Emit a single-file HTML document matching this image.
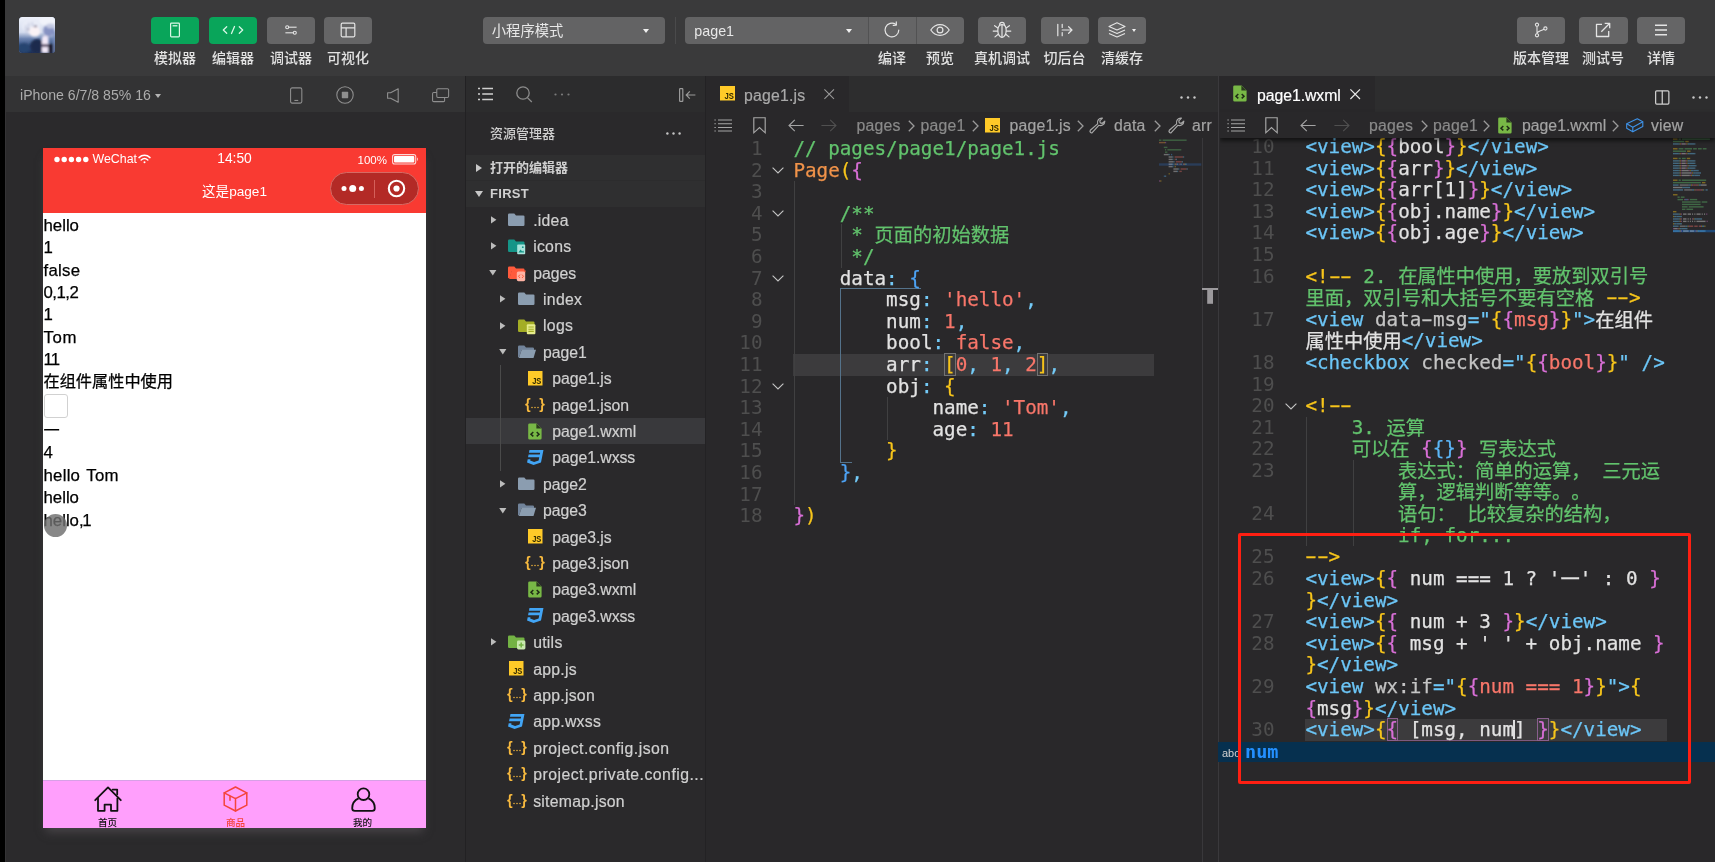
<!DOCTYPE html>
<html lang="zh-CN">
<head>
<meta charset="utf-8">
<title>page1 - WeChat DevTools</title>
<style>
*{box-sizing:border-box;margin:0;padding:0}
html,body{width:1715px;height:862px;overflow:hidden;background:#222123}
body{position:relative;font-family:"Liberation Sans","Noto Sans CJK SC",sans-serif;color:#ddd;-webkit-font-smoothing:antialiased}
.abs{position:absolute}
svg{display:block;overflow:visible}
#toolbar,#sim,#phone,#exp,.ed{will-change:transform}
/* toolbar */
#toolbar{position:absolute;left:0;top:0;width:1715px;height:76px;background:#3a3a3b}
.tbtn{position:absolute;top:17px;height:26.5px;border-radius:4px;background:#656566}
.tbtn.g{background:#09a55a}
.tbtn svg{position:absolute;left:50%;top:50%;transform:translate(-50%,-50%)}
.tlab{position:absolute;top:49.300px;height:18px;line-height:18px;font-size:14px;font-weight:500;color:#e2e2e2;text-align:center;white-space:nowrap;transform:translateX(-50%)}
.dd{position:absolute;top:17px;height:26.500px;background:#636364;border-radius:4px;color:#e8e8e8;font-size:14.300px;line-height:28px;padding-left:9.300px;white-space:nowrap}
.caret{position:absolute;width:0;height:0;border-left:3px solid transparent;border-right:3px solid transparent;border-top:4px solid #f0f0f0}
#leftstrip{position:absolute;left:0;top:0;width:5px;height:862px;background:#000}
</style>
</head>
<body>
<div id="toolbar">
  <!-- avatar -->
  <div class="abs" style="left:19px;top:17px;width:36.400px;height:36.200px;border-radius:3.500px;overflow:hidden;background:#8fa3c4">
    <svg width="36.400" height="36.200" viewBox="0 0 36 36" preserveAspectRatio="none">
      <defs>
        <linearGradient id="avbg" x1="0" y1="0" x2="0" y2="1"><stop offset="0" stop-color="#eef1fa"/><stop offset="0.420" stop-color="#d4dcee"/><stop offset="0.600" stop-color="#6b83b0"/><stop offset="0.800" stop-color="#34507e"/><stop offset="1" stop-color="#1d2f55"/></linearGradient>
        <filter id="avbl" x="-20%" y="-20%" width="140%" height="140%"><feGaussianBlur stdDeviation="0.800"/></filter>
      </defs>
      <rect width="36" height="36" fill="url(#avbg)"/>
      <g filter="url(#avbl)">
        <ellipse cx="29.500" cy="13.500" rx="5.500" ry="6" fill="#8692c2"/>
        <ellipse cx="28" cy="4" rx="8" ry="4.500" fill="#f1f3fa"/>
        <ellipse cx="31" cy="9" rx="4" ry="2.500" fill="#c3c9e2"/>
        <ellipse cx="12" cy="9" rx="9" ry="7" fill="#e9ecf7"/>
        <path d="M7 8c-1 3 0 7 2 10M10 6c-1 3-1 6 0 9M13 5c0 2 0 4 1 6" stroke="#b9bfd8" stroke-width="1" fill="none"/>
        <ellipse cx="15.500" cy="14.500" rx="5.500" ry="5" fill="#faf2f5"/>
        <ellipse cx="16.300" cy="9.300" rx="1.600" ry="0.900" fill="#5a5474"/>
        <ellipse cx="9" cy="12.200" rx="1.200" ry="0.700" fill="#8a88a4"/>
        <ellipse cx="18" cy="29" rx="7" ry="7" fill="#1b2a4e"/>
        <ellipse cx="5" cy="31" rx="6" ry="5" fill="#274470"/>
        <path d="M22.600 36V21.500c0-2 1.500-3.200 3.300-3.200s3.300 1.200 3.300 3.200V36Z" fill="#f1e8f7"/>
        <rect x="22.400" y="27.200" width="7" height="2.400" fill="#3b2c4c"/>
        <rect x="29.300" y="27" width="4.800" height="9" fill="#14172b"/>
        <rect x="34" y="14" width="2" height="22" fill="#7c8ebc"/>
      </g>
    </svg>
  </div>
  <!-- left group -->
  <div class="tbtn g" style="left:151px;width:48px">
    <svg width="10" height="15" viewBox="0 0 10 15" fill="none" stroke="#d9f7e6" stroke-width="1.2"><rect x="0.6" y="0.6" width="8.8" height="13.8" rx="0.8"/><path d="M2.6 3.3h4.8" stroke-width="1.3"/></svg>
  </div>
  <div class="tbtn g" style="left:209px;width:48px">
    <svg width="21" height="8" viewBox="0 0 21 8" fill="none" stroke="#d9f7e6" stroke-width="1.3" stroke-linecap="round" stroke-linejoin="round"><path d="M4.2 0.8L0.8 4l3.4 3.2M16.8 0.8L20.2 4l-3.4 3.2M12 0.5L9 7.5"/></svg>
  </div>
  <div class="tbtn" style="left:266.5px;width:48.5px">
    <svg width="12" height="10" viewBox="0 0 12 10" fill="none" stroke="#e4e4e4" stroke-width="1.1"><circle cx="2.2" cy="2.2" r="1.5"/><path d="M3.8 2.2H11.6"/><circle cx="9.8" cy="7.8" r="1.5"/><path d="M0.4 7.8H8.2"/></svg>
  </div>
  <div class="tbtn" style="left:324px;width:48px">
    <svg width="15" height="15" viewBox="0 0 15 15" fill="none" stroke="#e4e4e4" stroke-width="1.2"><rect x="0.7" y="0.7" width="13.6" height="13.6" rx="1.2"/><path d="M0.7 5.3H14.3M5.6 5.3V14.3"/></svg>
  </div>
  <div class="tlab" style="left:175px">模拟器</div>
  <div class="tlab" style="left:233px">编辑器</div>
  <div class="tlab" style="left:291px">调试器</div>
  <div class="tlab" style="left:348px">可视化</div>

  <!-- middle -->
  <div class="dd" style="left:482.5px;width:182.5px">小程序模式<span class="caret" style="left:160px;top:12px"></span></div>
  <div class="abs" style="left:675px;top:17px;width:1px;height:27px;background:#4a4a4b"></div>
  <div class="dd" style="left:685px;width:183px;border-radius:4px 0 0 4px">page1<span class="caret" style="left:161px;top:12px"></span></div>
  <div class="tbtn" style="left:868px;width:47.500px;border-radius:0;border-left:1px solid #525253">
    <svg width="17.500" height="17.500" viewBox="0 0 16 16" fill="none" stroke="#e4e4e4" stroke-width="1.100" stroke-linecap="round"><path d="M14.2 8A6.3 6.3 0 1 1 11.6 2.9"/><path d="M11.9 0.6l0.1 2.9-2.9 0.2" stroke-linejoin="round"/></svg>
  </div>
  <div class="tbtn" style="left:915.500px;width:48.300px;border-radius:0 4px 4px 0;border-left:1px solid #525253">
    <svg width="20" height="12" viewBox="0 0 20 12" fill="none" stroke="#e4e4e4" stroke-width="1.2"><path d="M0.8 6C3.2 2.4 6.4 0.7 10 0.7S16.8 2.4 19.2 6C16.8 9.6 13.6 11.3 10 11.3S3.2 9.6 0.8 6Z"/><circle cx="10" cy="6" r="2.9"/></svg>
  </div>
  <div class="tbtn" style="left:978px;width:48px">
    <svg width="20" height="17" viewBox="0 0 20 17" fill="none" stroke="#e4e4e4" stroke-width="1.2" stroke-linecap="round"><path d="M10 3.2c-2.6 0-4.2 2-4.2 5.6S7.4 15.8 10 15.8s4.2-3.4 4.2-7S12.600 3.200 10 3.200Z"/><path d="M10 3.400V15.600"/><path d="M7.600 3.600C7.600 1.800 8.600 0.800 10 0.800s2.400 1 2.400 2.800"/><path d="M5.800 6.400L2.600 4.200M5.600 9.600H1.200M6.200 12.800L3 15.400M14.200 6.400l3.200-2.200M14.400 9.600h4.400M13.800 12.800l3.200 2.600"/></svg>
  </div>
  <div class="tbtn" style="left:1040.5px;width:48px">
    <svg width="16" height="13" viewBox="0 0 16 13" fill="none" stroke="#e4e4e4" stroke-width="1.2" stroke-linecap="round" stroke-linejoin="round"><path d="M0.800 0.800V12.200M5.200 0.800v3.200M5.200 9v3.200M5.200 6.500H15M11.600 3.200L15 6.500l-3.400 3.300"/></svg>
  </div>
  <div class="tbtn" style="left:1098px;width:48px">
    <svg style="margin-left:-5px" width="18" height="16" viewBox="0 0 18 16" fill="none" stroke="#e4e4e4" stroke-width="1.1" stroke-linejoin="round"><path d="M9 0.800L17 4.400 9 8 1 4.400Z"/><path d="M1 8L9 11.600 17 8"/><path d="M1 11.400L9 15 17 11.400"/></svg>
    <span class="caret" style="left:34px;top:11.5px;border-left-width:2.5px;border-right-width:2.5px;border-top-width:3.5px"></span>
  </div>
  <div class="tlab" style="left:892px">编译</div>
  <div class="tlab" style="left:940px">预览</div>
  <div class="tlab" style="left:1002px">真机调试</div>
  <div class="tlab" style="left:1064.500px">切后台</div>
  <div class="tlab" style="left:1122px">清缓存</div>

  <!-- right -->
  <div class="tbtn" style="left:1517px;width:48px">
    <svg width="14" height="15" viewBox="0 0 14 15" fill="none" stroke="#e4e4e4" stroke-width="1.1"><circle cx="3" cy="2.200" r="1.600"/><circle cx="3" cy="12.800" r="1.600"/><circle cx="11.400" cy="6" r="1.600"/><path d="M3 3.800V11.200M3 11.200C3 8.500 6 8.800 10 6.800"/></svg>
  </div>
  <div class="tbtn" style="left:1579px;width:48.500px">
    <svg width="15" height="15" viewBox="0 0 15 15" fill="none" stroke="#e4e4e4" stroke-width="1.300" stroke-linejoin="round"><path d="M6.500 1.800H1v12.200h12.200V8.500"/><path d="M5.800 9.200L14 1M9.200 0.800H14.200V5.800"/></svg>
  </div>
  <div class="tbtn" style="left:1637px;width:48px">
    <svg width="13" height="12" viewBox="0 0 13 12" fill="none" stroke="#e4e4e4" stroke-width="1.400"><path d="M0.500 1.200H12.500M0.500 6H12.500M0.500 10.800H12.500"/></svg>
  </div>
  <div class="tlab" style="left:1541px">版本管理</div>
  <div class="tlab" style="left:1603px">测试号</div>
  <div class="tlab" style="left:1661px">详情</div>
</div>
<style>
#sim{position:absolute;left:5px;top:76px;width:460.500px;height:786px;background:#2b2a2c;border-left:1px solid #343335}
#simhead{position:absolute;left:0;top:0;width:461px;height:35.5px;background:#333334}
#simhead .dev{position:absolute;left:14px;top:9.600px;font-size:14.100px;line-height:18px;color:#acacac;white-space:nowrap}
#phone{position:absolute;left:43px;top:148px;width:383px;height:680px;background:#fff;box-shadow:0 7px 9px -3px rgba(75,72,75,.9)}
#phead{position:absolute;left:0;top:0;width:100%;height:65px;background:#f93a32}
#phead .st{position:absolute;top:4px;height:14px;line-height:14px;font-size:12px;color:#fff;white-space:nowrap}
#pbody{position:absolute;left:0.500px;top:66.800px;color:#000;-webkit-text-stroke-width:0.250px;font-size:16.8px;line-height:22.4px;white-space:nowrap}
#pbody div{height:22.4px}
#ptab{position:absolute;left:0;top:631.500px;width:100%;height:48.500px;background:#ff9ffc;border-top:1px solid #d7a0e6}
#ptab .tl{position:absolute;top:36.200px;font-weight:500;font-size:9.600px;line-height:12px;transform:translateX(-50%);white-space:nowrap;color:#111}
</style>
<div id="sim">
  <div id="simhead">
    <div class="dev">iPhone 6/7/8 85% 16 <span style="display:inline-block;width:0;height:0;border-left:3.500px solid transparent;border-right:3.500px solid transparent;border-top:4.500px solid #b4b4b4;vertical-align:1.500px"></span></div>
    <svg class="abs" style="left:284.200px;top:10.800px" width="12.600" height="17" viewBox="0 0 13 17" fill="none" stroke="#8f8f8f" stroke-width="1.100"><rect x="0.600" y="0.600" width="11.600" height="15.800" rx="1.600"/><path d="M4.500 13.600h4"/></svg>
    <svg class="abs" style="left:329.600px;top:10.200px" width="18" height="18" viewBox="0 0 18 18" fill="none" stroke="#8f8f8f" stroke-width="1.100"><circle cx="9" cy="9" r="8.200"/><rect x="5.800" y="5.800" width="6.400" height="6.400" rx="0.600" fill="#8f8f8f" stroke="none"/></svg>
    <svg class="abs" style="left:381px;top:11.800px" width="12" height="15" viewBox="0 0 12 15" fill="none" stroke="#8f8f8f" stroke-width="1.100" stroke-linejoin="round"><path d="M0.600 4.700H3.600L11.200 0.800V14.200L3.600 10.300H0.600Z"/></svg>
    <svg class="abs" style="left:426.200px;top:11.800px" width="17.200" height="14.500" viewBox="0 0 18 15" fill="none" stroke="#8f8f8f" stroke-width="1.100" stroke-linejoin="round"><rect x="5" y="0.600" width="12.400" height="9.200" rx="1.200"/><path d="M5 4.600H1.800a1.200 1.200 0 0 0-1.200 1.200V13a1.200 1.200 0 0 0 1.200 1.200H12a1.200 1.200 0 0 0 1.200-1.200V9.800"/></svg>
  </div>
</div>
<div id="phone">
  <div id="phead">
    <!-- status bar -->
    <svg class="abs" style="left:10.500px;top:8px" width="36" height="7" viewBox="0 0 36 7" fill="#fff"><circle cx="3" cy="3.500" r="2.700"/><circle cx="10.200" cy="3.500" r="2.700"/><circle cx="17.400" cy="3.500" r="2.700"/><circle cx="24.600" cy="3.500" r="2.700"/><circle cx="31.800" cy="3.500" r="2.700"/></svg>
    <div class="st" style="left:49.500px;font-size:12.400px">WeChat</div>
    <svg class="abs" style="left:94.500px;top:6px" width="13" height="10" viewBox="0 0 13 10" fill="none" stroke="#fff" stroke-width="1.500" stroke-linecap="round"><path d="M1 3.600C4.200 0.600 8.800 0.600 12 3.600"/><path d="M3.200 6C5.200 4.200 7.800 4.200 9.800 6"/><circle cx="6.500" cy="8.300" r="1" fill="#fff" stroke="none"/></svg>
    <div class="st" style="left:0;width:100%;text-align:center;font-size:13.800px;top:3.500px">14:50</div>
    <div class="st" style="left:314.500px;font-size:11.500px;top:4.500px">100%</div>
    <svg class="abs" style="left:349px;top:6px" width="27" height="11" viewBox="0 0 28 11" preserveAspectRatio="none"><rect x="0.600" y="0.600" width="24" height="9.400" rx="2" fill="none" stroke="#fff" stroke-width="1.100" opacity=".8"/><rect x="2.100" y="2.100" width="21" height="6.400" rx="1" fill="#fff"/><path d="M26 3.600v3.400c1.200-0.300 1.200-3.100 0-3.400Z" fill="#fff" opacity=".8"/></svg>
    <div class="abs" style="left:0;width:100%;top:34.700px;text-align:center;font-size:13.600px;line-height:18px;color:#fff">这是page1</div>
    <!-- capsule -->
    <div class="abs" style="left:286.800px;top:24.300px;width:89.200px;height:32.500px;border-radius:16.500px;background:#b32a26;border:1px solid #d66a64">
      <svg class="abs" style="left:10.500px;top:10.500px" width="24" height="9" viewBox="0 0 24 9" fill="#fff"><circle cx="3" cy="4.500" r="2.500"/><circle cx="11.700" cy="4.500" r="3.500"/><circle cx="20.400" cy="4.500" r="2.500"/></svg>
      <div class="abs" style="left:43px;top:6.500px;width:1px;height:18px;background:#d4605a"></div>
      <svg class="abs" style="left:56.500px;top:6px" width="19" height="19" viewBox="0 0 19 19"><circle cx="9.500" cy="9.500" r="7.700" fill="none" stroke="#fff" stroke-width="2.100"/><circle cx="9.500" cy="9.500" r="3.100" fill="#fff"/></svg>
    </div>
  </div>
  <div id="pbody">
    <div>hello</div>
    <div>1</div>
    <div style="letter-spacing:0.300px">false</div>
    <div style="letter-spacing:-0.500px">0,1,2</div>
    <div>1</div>
    <div style="letter-spacing:0.700px">Tom</div>
    <div style="letter-spacing:-0.900px">11</div>
    <div style="font-size:16.200px;position:relative;top:-1.500px">在组件属性中使用</div>
    <div style="height:26.100px"><span style="display:block;position:relative;left:0.500px;top:0.200px;width:24px;height:23.500px;border:1px solid #d1d1d1;border-radius:3px;background:#fff"></span></div>
    <div style="font-size:16.200px;position:relative;top:-1.500px">一</div>
    <div>4</div>
    <div style="word-spacing:1.500px;letter-spacing:0.250px">hello Tom</div>
    <div>hello</div>
    <div>hello<span style="letter-spacing:-1.400px">,1</span></div>
  </div>
  <div id="ptab">
    <!-- home -->
    <svg class="abs" style="left:50.500px;top:5.500px" width="28" height="26" viewBox="0 0 28 26" fill="none" stroke="#111" stroke-width="1.800" stroke-linejoin="round" stroke-linecap="round"><path d="M1.200 14.200L14 1.400 26.800 14.200"/><path d="M4 12.400V24.800H10.600V18.600H17V24.800H23.400V12.400"/><path d="M18.600 3.600H23.200V8.400"/></svg>
    <!-- box -->
    <svg class="abs" style="left:180px;top:5.500px" width="25" height="26" viewBox="0 0 25 26" fill="none" stroke="#f5443b" stroke-width="1.500" stroke-linejoin="round" stroke-linecap="round"><path d="M12.500 1L23.800 6.800V19.200L12.500 25 1.200 19.200V6.800Z"/><path d="M1.200 6.800L12.500 12.600 23.800 6.800M12.500 12.600V25M7 9.800V14.200"/></svg>
    <!-- user -->
    <svg class="abs" style="left:307.500px;top:6.500px" width="25" height="25" viewBox="0 0 25 25" fill="none" stroke="#111" stroke-width="1.800" stroke-linejoin="round"><circle cx="12.500" cy="7.200" r="5.800"/><path d="M7.600 11.400C3.200 13.400 1.200 17.400 1.200 21.200C1.200 22.800 2.200 23.800 3.800 23.800H21.200C22.800 23.800 23.800 22.800 23.800 21.200C23.800 17.400 21.800 13.400 17.400 11.400"/></svg>
    <div class="tl" style="left:64.500px">首页</div>
    <div class="tl" style="left:192.500px;color:#f5443b">商品</div>
    <div class="tl" style="left:319.500px">我的</div>
  </div>
  <div class="abs" style="left:0.500px;top:365.500px;width:23px;height:23px;border-radius:50%;background:rgba(110,110,110,.82)"></div>
</div>
<style>
#exp{position:absolute;left:466px;top:76px;width:239.300px;height:786px;background:#2a292b;overflow:hidden}
#exp .hd{position:absolute;left:0;top:0;width:100%;height:35.500px;background:#2c2c2d}
#exp .sec{position:absolute;left:0;width:100%;background:#2f2f30}
#exp .st{position:absolute;left:24px;font-size:13px;font-weight:700;color:#d0d0d0;white-space:nowrap;line-height:18px}
.row{position:absolute;left:0;width:100%;height:26.400px}
.row.sel{background:#39393c}
.row .nm{position:absolute;top:1px;line-height:26.400px;font-size:15.800px;color:#d0d0d0;white-space:nowrap;letter-spacing:0.250px;-webkit-text-stroke-width:0.200px}
.row .ar{position:absolute}
.row .ic{position:absolute}
</style>
<div id="exp">
  <div class="hd">
    <svg class="abs" style="left:12px;top:11px" width="15" height="14" viewBox="0 0 15 14" fill="none" stroke="#cfcfcf" stroke-width="1.500"><path d="M4.200 1.400H15M4.200 7H15M4.200 12.600H15"/><path d="M0 1.400H2M0 7H2M0 12.600H2"/></svg>
    <svg class="abs" style="left:49.500px;top:9.500px" width="17" height="17" viewBox="0 0 17 17" fill="none" stroke="#8c8c8c" stroke-width="1.300"><circle cx="7" cy="7" r="6.200"/><path d="M11.400 11.600L15.800 16"/></svg>
    <svg class="abs" style="left:88px;top:17px" width="16" height="3" viewBox="0 0 16 3" fill="#7a7a7a"><circle cx="1.500" cy="1.500" r="1.100"/><circle cx="8" cy="1.500" r="1.100"/><circle cx="14.500" cy="1.500" r="1.100"/></svg>
    <svg class="abs" style="left:212.500px;top:11.500px" width="17" height="14" viewBox="0 0 17 14" fill="none" stroke="#9a9a9a" stroke-width="1.200"><rect x="0.600" y="0.600" width="3.200" height="12.800" rx="0.600"/><path d="M16.400 7H7.400M10.800 3.400L7.200 7l3.600 3.600"/></svg>
  </div>
  <div class="abs" style="left:24px;top:48.800px;font-size:13px;font-weight:500;line-height:18px;color:#cfcfcf;white-space:nowrap">资源管理器</div>
  <svg class="abs" style="left:200px;top:55.500px" width="15" height="3" viewBox="0 0 15 3" fill="#c4c4c4"><circle cx="1.400" cy="1.500" r="1.200"/><circle cx="7.500" cy="1.500" r="1.200"/><circle cx="13.600" cy="1.500" r="1.200"/></svg>
  <div class="sec" style="top:78.500px;height:52.500px"></div>
  <div class="abs" style="left:0;top:104px;width:100%;height:1px;background:#2c2c2d"></div>
  <svg class="abs" style="left:10px;top:87.500px" width="6" height="8" viewBox="0 0 6 8"><path d="M0 0L6 4 0 8Z" fill="#c8c8c8"/></svg>
  <div class="st" style="top:82.500px">打开的编辑器</div>
  <svg class="abs" style="left:8.500px;top:115px" width="8" height="6" viewBox="0 0 8 6"><path d="M0 0H8L4 6Z" fill="#c8c8c8"/></svg>
  <div class="st" style="top:108.500px;letter-spacing:0.300px">FIRST</div>

<div class="row" style="top:130.8px"><span class="ar" style="left:24.5px;top:9.200px"><svg width="5.400" height="7.600" viewBox="0 0 6 8"><path d="M0 0L6 4 0 8Z" fill="#bcbcbc"/></svg></span><span class="ic" style="left:41.5px;top:6.200px"><svg width="19" height="16" viewBox="0 0 19 16"><path d="M1.2 0.600H6.300L8 2.400H15.300A1.200 1.200 0 0 1 16.500 3.600V11.800A1.200 1.200 0 0 1 15.300 13H1.200A1.200 1.200 0 0 1 0 11.800V1.800A1.200 1.200 0 0 1 1.200 0.600Z" fill="#8b9db0"/></svg></span><span class="nm" style="left:67.2px">.idea</span></div>
<div class="row" style="top:157.2px"><span class="ar" style="left:24.5px;top:9.200px"><svg width="5.400" height="7.600" viewBox="0 0 6 8"><path d="M0 0L6 4 0 8Z" fill="#bcbcbc"/></svg></span><span class="ic" style="left:41.5px;top:6.200px"><svg width="19" height="16" viewBox="0 0 19 16"><path d="M1.2 0.600H6.300L8 2.400H15.300A1.200 1.200 0 0 1 16.500 3.600V11.800A1.200 1.200 0 0 1 15.300 13H1.200A1.200 1.200 0 0 1 0 11.800V1.800A1.200 1.200 0 0 1 1.200 0.600Z" fill="#159588"/><rect x="9.200" y="5.600" width="8" height="9.600" rx="0.800" fill="#a9e4dc"/><path d="M10.400 13.600l2.200-3 1.600 1.800 1-1 1 2.200Z" fill="#159588"/><circle cx="14.800" cy="8.200" r="0.900" fill="#159588"/></svg></span><span class="nm" style="left:67.2px">icons</span></div>
<div class="row" style="top:183.6px"><span class="ar" style="left:23.0px;top:10.500px"><svg width="7.600" height="5.400" viewBox="0 0 8 6"><path d="M0 0H8L4 6Z" fill="#bcbcbc"/></svg></span><span class="ic" style="left:41.5px;top:6.200px"><svg width="19" height="16" viewBox="0 0 19 16"><path d="M1.200 0.600H6.300L8 2.400H15.300A1.200 1.200 0 0 1 16.500 3.600V5H3.800L1.600 12.600 0 12V1.800A1.200 1.200 0 0 1 1.200 0.600Z" fill="#ff5a3c"/><path d="M3.600 4.600H17.800L15.600 13H1.200Z" fill="#ff5a3c"/><rect x="8.800" y="5.400" width="8.400" height="9.800" rx="1.600" fill="#ffb3a4"/><path d="M12 8.600l-1.500 1.700 1.500 1.700M14 8.600l1.500 1.700-1.500 1.700" stroke="#ff5a3c" stroke-width="1" fill="none"/></svg></span><span class="nm" style="left:67.2px;letter-spacing:-0.050px">pages</span></div>
<div class="row" style="top:210.0px"><span class="ar" style="left:34.4px;top:9.200px"><svg width="5.400" height="7.600" viewBox="0 0 6 8"><path d="M0 0L6 4 0 8Z" fill="#bcbcbc"/></svg></span><span class="ic" style="left:51.5px;top:6.200px"><svg width="19" height="16" viewBox="0 0 19 16"><path d="M1.2 0.600H6.300L8 2.400H15.300A1.200 1.200 0 0 1 16.500 3.600V11.800A1.200 1.200 0 0 1 15.300 13H1.200A1.200 1.200 0 0 1 0 11.800V1.800A1.200 1.200 0 0 1 1.200 0.600Z" fill="#8b9db0"/></svg></span><span class="nm" style="left:77.1px">index</span></div>
<div class="row" style="top:236.4px"><span class="ar" style="left:34.4px;top:9.200px"><svg width="5.400" height="7.600" viewBox="0 0 6 8"><path d="M0 0L6 4 0 8Z" fill="#bcbcbc"/></svg></span><span class="ic" style="left:51.5px;top:6.200px"><svg width="19" height="16" viewBox="0 0 19 16"><path d="M1.2 0.600H6.300L8 2.400H15.300A1.200 1.200 0 0 1 16.500 3.600V11.800A1.200 1.200 0 0 1 15.300 13H1.200A1.200 1.200 0 0 1 0 11.800V1.800A1.200 1.200 0 0 1 1.200 0.600Z" fill="#a4ad25"/><rect x="8.800" y="5.200" width="8.600" height="10" rx="1" fill="#e6ec8c"/><path d="M10.400 8h5.400M10.400 10.200h5.400M10.400 12.400h5.400" stroke="#a4ad25" stroke-width="1.100"/></svg></span><span class="nm" style="left:77.1px">logs</span></div>
<div class="row" style="top:262.8px"><span class="ar" style="left:32.9px;top:10.500px"><svg width="7.600" height="5.400" viewBox="0 0 8 6"><path d="M0 0H8L4 6Z" fill="#bcbcbc"/></svg></span><span class="ic" style="left:51.5px;top:6.200px"><svg width="19" height="16" viewBox="0 0 19 16"><path d="M1.200 0.600H6.300L8 2.400H14.800A1.200 1.200 0 0 1 16 3.600V5H3.600L1 12.800 0 12V1.800A1.200 1.200 0 0 1 1.200 0.600Z" fill="#71839a"/><path d="M3.700 4.800H18L15.500 13H0.900Z" fill="#8b9db0"/></svg></span><span class="nm" style="left:77.1px;letter-spacing:-0.050px">page1</span></div>
<div class="row" style="top:289.2px"><span class="ic" style="left:62.0px;top:5.9px"><svg width="14.500" height="14.500" viewBox="0 0 14.500 14.500"><rect width="14.500" height="14.500" fill="#ffca28"/><text x="4.200" y="12.600" font-family="Liberation Sans,sans-serif" font-weight="700" font-size="9.400" fill="#2f2800" textLength="9.200" lengthAdjust="spacingAndGlyphs">JS</text></svg></span><span class="nm" style="left:86.3px;letter-spacing:-0.050px">page1.js</span></div>
<div class="row" style="top:315.6px"><span class="ic" style="left:59.3px;top:5.2px"><svg width="20" height="16" viewBox="0 0 20 16"><text x="0" y="12.400" font-family="Liberation Sans,sans-serif" font-weight="700" font-size="14.500" fill="#f7b93e">{</text><text x="20" y="12.400" text-anchor="end" font-family="Liberation Sans,sans-serif" font-weight="700" font-size="14.500" fill="#f7b93e">}</text><circle cx="7" cy="10.600" r="0.750" fill="#f7b93e"/><circle cx="10" cy="10.600" r="0.750" fill="#f7b93e"/><circle cx="13" cy="10.600" r="0.750" fill="#f7b93e"/></svg></span><span class="nm" style="left:86.3px;letter-spacing:-0.050px">page1.json</span></div>
<div class="row sel" style="top:342.0px"><span class="ic" style="left:62.3px;top:4.7px"><svg width="14" height="17" viewBox="0 0 14 17"><path d="M1.600 0.400H8.600L13.600 5.400V15.200A1.400 1.400 0 0 1 12.200 16.600H1.600A1.400 1.400 0 0 1 0.200 15.200V1.800A1.400 1.400 0 0 1 1.600 0.400Z" fill="#78b846"/><path d="M8.400 0.400V5.600H13.600Z" fill="#2b3a1f"/><path d="M5.300 9L3 11.200 5.300 13.400M8.700 9L11 11.200 8.700 13.400" stroke="#1f2b16" stroke-width="1.500" fill="none"/></svg></span><span class="nm" style="left:86.3px;letter-spacing:-0.050px">page1.wxml</span></div>
<div class="row" style="top:368.4px"><span class="ic" style="left:61.0px;top:5.7px"><svg width="16.500" height="15" viewBox="2 3 20 18"><path d="M5 3l-.65 3.340h13.590L17.500 8.500H3.920l-.66 3.330h13.590l-.76 3.810-5.480 1.810-4.750-1.810.33-1.640H2.850l-.79 4 7.850 3 9.050-3 1.200-6.030.24-1.210L21.940 3H5z" fill="#42a5f5"/></svg></span><span class="nm" style="left:86.3px;letter-spacing:-0.050px">page1.wxss</span></div>
<div class="row" style="top:394.8px"><span class="ar" style="left:34.4px;top:9.200px"><svg width="5.400" height="7.600" viewBox="0 0 6 8"><path d="M0 0L6 4 0 8Z" fill="#bcbcbc"/></svg></span><span class="ic" style="left:51.5px;top:6.200px"><svg width="19" height="16" viewBox="0 0 19 16"><path d="M1.2 0.600H6.300L8 2.400H15.300A1.200 1.200 0 0 1 16.500 3.600V11.800A1.200 1.200 0 0 1 15.300 13H1.200A1.200 1.200 0 0 1 0 11.800V1.800A1.200 1.200 0 0 1 1.200 0.600Z" fill="#8b9db0"/></svg></span><span class="nm" style="left:77.1px;letter-spacing:-0.050px">page2</span></div>
<div class="row" style="top:421.2px"><span class="ar" style="left:32.9px;top:10.500px"><svg width="7.600" height="5.400" viewBox="0 0 8 6"><path d="M0 0H8L4 6Z" fill="#bcbcbc"/></svg></span><span class="ic" style="left:51.5px;top:6.200px"><svg width="19" height="16" viewBox="0 0 19 16"><path d="M1.200 0.600H6.300L8 2.400H14.800A1.200 1.200 0 0 1 16 3.600V5H3.600L1 12.800 0 12V1.800A1.200 1.200 0 0 1 1.200 0.600Z" fill="#71839a"/><path d="M3.700 4.800H18L15.500 13H0.900Z" fill="#8b9db0"/></svg></span><span class="nm" style="left:77.1px;letter-spacing:-0.050px">page3</span></div>
<div class="row" style="top:447.6px"><span class="ic" style="left:62.0px;top:5.9px"><svg width="14.500" height="14.500" viewBox="0 0 14.500 14.500"><rect width="14.500" height="14.500" fill="#ffca28"/><text x="4.200" y="12.600" font-family="Liberation Sans,sans-serif" font-weight="700" font-size="9.400" fill="#2f2800" textLength="9.200" lengthAdjust="spacingAndGlyphs">JS</text></svg></span><span class="nm" style="left:86.3px;letter-spacing:-0.050px">page3.js</span></div>
<div class="row" style="top:474.0px"><span class="ic" style="left:59.3px;top:5.2px"><svg width="20" height="16" viewBox="0 0 20 16"><text x="0" y="12.400" font-family="Liberation Sans,sans-serif" font-weight="700" font-size="14.500" fill="#f7b93e">{</text><text x="20" y="12.400" text-anchor="end" font-family="Liberation Sans,sans-serif" font-weight="700" font-size="14.500" fill="#f7b93e">}</text><circle cx="7" cy="10.600" r="0.750" fill="#f7b93e"/><circle cx="10" cy="10.600" r="0.750" fill="#f7b93e"/><circle cx="13" cy="10.600" r="0.750" fill="#f7b93e"/></svg></span><span class="nm" style="left:86.3px;letter-spacing:-0.050px">page3.json</span></div>
<div class="row" style="top:500.4px"><span class="ic" style="left:62.3px;top:4.7px"><svg width="14" height="17" viewBox="0 0 14 17"><path d="M1.600 0.400H8.600L13.600 5.400V15.200A1.400 1.400 0 0 1 12.200 16.600H1.600A1.400 1.400 0 0 1 0.200 15.200V1.800A1.400 1.400 0 0 1 1.600 0.400Z" fill="#78b846"/><path d="M8.400 0.400V5.600H13.600Z" fill="#2b3a1f"/><path d="M5.300 9L3 11.200 5.300 13.400M8.700 9L11 11.200 8.700 13.400" stroke="#1f2b16" stroke-width="1.500" fill="none"/></svg></span><span class="nm" style="left:86.3px;letter-spacing:-0.050px">page3.wxml</span></div>
<div class="row" style="top:526.8px"><span class="ic" style="left:61.0px;top:5.7px"><svg width="16.500" height="15" viewBox="2 3 20 18"><path d="M5 3l-.65 3.340h13.590L17.500 8.500H3.920l-.66 3.330h13.590l-.76 3.810-5.480 1.810-4.750-1.810.33-1.640H2.850l-.79 4 7.850 3 9.050-3 1.200-6.030.24-1.210L21.940 3H5z" fill="#42a5f5"/></svg></span><span class="nm" style="left:86.3px;letter-spacing:-0.050px">page3.wxss</span></div>
<div class="row" style="top:553.2px"><span class="ar" style="left:24.5px;top:9.200px"><svg width="5.400" height="7.600" viewBox="0 0 6 8"><path d="M0 0L6 4 0 8Z" fill="#bcbcbc"/></svg></span><span class="ic" style="left:41.5px;top:6.200px"><svg width="19" height="16" viewBox="0 0 19 16"><path d="M1.2 0.600H6.300L8 2.400H15.300A1.200 1.200 0 0 1 16.500 3.600V11.800A1.200 1.200 0 0 1 15.300 13H1.200A1.200 1.200 0 0 1 0 11.800V1.800A1.200 1.200 0 0 1 1.200 0.600Z" fill="#73b244"/><rect x="9" y="5.600" width="8.400" height="8.800" rx="1.400" fill="#c8e8ae"/><path d="M13.200 7.400v5.200M10.800 10h4.800" stroke="#73b244" stroke-width="1.500"/></svg></span><span class="nm" style="left:67.2px">utils</span></div>
<div class="row" style="top:579.6px"><span class="ic" style="left:43.2px;top:5.9px"><svg width="14.500" height="14.500" viewBox="0 0 14.500 14.500"><rect width="14.500" height="14.500" fill="#ffca28"/><text x="4.200" y="12.600" font-family="Liberation Sans,sans-serif" font-weight="700" font-size="9.400" fill="#2f2800" textLength="9.200" lengthAdjust="spacingAndGlyphs">JS</text></svg></span><span class="nm" style="left:67.2px">app.js</span></div>
<div class="row" style="top:606.0px"><span class="ic" style="left:40.5px;top:5.2px"><svg width="20" height="16" viewBox="0 0 20 16"><text x="0" y="12.400" font-family="Liberation Sans,sans-serif" font-weight="700" font-size="14.500" fill="#f7b93e">{</text><text x="20" y="12.400" text-anchor="end" font-family="Liberation Sans,sans-serif" font-weight="700" font-size="14.500" fill="#f7b93e">}</text><circle cx="7" cy="10.600" r="0.750" fill="#f7b93e"/><circle cx="10" cy="10.600" r="0.750" fill="#f7b93e"/><circle cx="13" cy="10.600" r="0.750" fill="#f7b93e"/></svg></span><span class="nm" style="left:67.2px">app.json</span></div>
<div class="row" style="top:632.4px"><span class="ic" style="left:42.2px;top:5.7px"><svg width="16.500" height="15" viewBox="2 3 20 18"><path d="M5 3l-.65 3.340h13.590L17.500 8.500H3.920l-.66 3.330h13.590l-.76 3.810-5.480 1.810-4.750-1.810.33-1.640H2.850l-.79 4 7.850 3 9.050-3 1.200-6.030.24-1.210L21.940 3H5z" fill="#42a5f5"/></svg></span><span class="nm" style="left:67.2px">app.wxss</span></div>
<div class="row" style="top:658.8px"><span class="ic" style="left:40.5px;top:5.2px"><svg width="20" height="16" viewBox="0 0 20 16"><text x="0" y="12.400" font-family="Liberation Sans,sans-serif" font-weight="700" font-size="14.500" fill="#f7b93e">{</text><text x="20" y="12.400" text-anchor="end" font-family="Liberation Sans,sans-serif" font-weight="700" font-size="14.500" fill="#f7b93e">}</text><circle cx="7" cy="10.600" r="0.750" fill="#f7b93e"/><circle cx="10" cy="10.600" r="0.750" fill="#f7b93e"/><circle cx="13" cy="10.600" r="0.750" fill="#f7b93e"/></svg></span><span class="nm" style="left:67.2px;letter-spacing:0.480px">project.config.json</span></div>
<div class="row" style="top:685.2px"><span class="ic" style="left:40.5px;top:5.2px"><svg width="20" height="16" viewBox="0 0 20 16"><text x="0" y="12.400" font-family="Liberation Sans,sans-serif" font-weight="700" font-size="14.500" fill="#f7b93e">{</text><text x="20" y="12.400" text-anchor="end" font-family="Liberation Sans,sans-serif" font-weight="700" font-size="14.500" fill="#f7b93e">}</text><circle cx="7" cy="10.600" r="0.750" fill="#f7b93e"/><circle cx="10" cy="10.600" r="0.750" fill="#f7b93e"/><circle cx="13" cy="10.600" r="0.750" fill="#f7b93e"/></svg></span><span class="nm" style="left:67.2px;letter-spacing:0.480px">project.private.config...</span></div>
<div class="row" style="top:711.6px"><span class="ic" style="left:40.5px;top:5.2px"><svg width="20" height="16" viewBox="0 0 20 16"><text x="0" y="12.400" font-family="Liberation Sans,sans-serif" font-weight="700" font-size="14.500" fill="#f7b93e">{</text><text x="20" y="12.400" text-anchor="end" font-family="Liberation Sans,sans-serif" font-weight="700" font-size="14.500" fill="#f7b93e">}</text><circle cx="7" cy="10.600" r="0.750" fill="#f7b93e"/><circle cx="10" cy="10.600" r="0.750" fill="#f7b93e"/><circle cx="13" cy="10.600" r="0.750" fill="#f7b93e"/></svg></span><span class="nm" style="left:67.2px">sitemap.json</span></div>
<div class="abs" style="left:34px;top:289.2px;width:1px;height:105.6px;background:#4a4a4a"></div>
</div>
<style>
.ed{position:absolute;top:76px;height:786px;background:#29282a;overflow:hidden}
.tabs{position:absolute;left:0;top:0;width:100%;height:36px;background:#2d2d2e}
.tab{position:absolute;left:0;top:0;height:36px;background:#29282a}
.tab .tn{position:absolute;top:9.800px;-webkit-text-stroke-width:0.200px;letter-spacing:0.200px;font-size:15.800px;line-height:20px;white-space:nowrap}
.bc{position:absolute;left:0;top:36px;width:100%;height:26px;background:#29282a}
.bc .bt{position:absolute;top:4.100px;-webkit-text-stroke-width:0.200px;letter-spacing:0.200px;font-size:15.800px;line-height:20px;color:#a3a3a3;white-space:nowrap}
.bc .bt.dk{color:#8a8a8a}
.bc svg{position:absolute}
.code{position:absolute;font-family:"DejaVu Sans Mono","Noto Sans CJK SC",monospace;font-size:19.250px;line-height:21.600px;height:21.600px;white-space:pre;color:#dcdcdc;text-spacing-trim:space-all;font-kerning:none;font-variant-ligatures:none;-webkit-text-stroke-width:0.250px}
.ln{position:absolute;font-family:"DejaVu Sans Mono",monospace;font-size:19.250px;line-height:21.600px;height:21.600px;text-align:right;color:#4e4e4e;width:60px}
.fold{position:absolute}
.c{color:#62c36d}.o{color:#f1934a}.y{color:#f7c51b}.m{color:#d86fd6}.b{color:#4da3f5}
.w{color:#e2e2e2}.p{color:#74cbf8}.s{color:#f8766a}.t{color:#6cc6f7}.a{color:#c4c4c4}
.bm{outline:1px solid #727272;outline-offset:-1px}
.bm2{outline:1px solid #8a5f8e;outline-offset:-1px}
.cur{display:inline-block;width:2px;height:19px;background:#e0e0e0;vertical-align:-3px;margin:0 -1px}
.hy{display:inline-block;transform:scaleX(1.750)}
.cj{position:relative;top:0.800px}
.b2{color:#5cb6f8}
.ig{position:absolute;width:1px;background:#404041;margin-left:1px}
.iga{position:absolute;background:#54728a;margin-left:0.600px}
</style>

<div class="ed" style="left:706px;width:512.500px">
<div class="tabs">
 <div class="tab" style="width:143px">
  <svg class="abs" style="left:13.500px;top:9.800px" width="15" height="14.500" viewBox="0 0 15 14.500"><rect width="15" height="14.500" fill="#ffca28"/><text x="4.500" y="12.700" font-family="Liberation Sans,sans-serif" font-weight="700" font-size="9.600" fill="#2f2800" textLength="9.400" lengthAdjust="spacingAndGlyphs">JS</text></svg>
  <div class="tn" style="left:38px;color:#a9a9a9">page1.js</div>
  <svg class="abs" style="left:118.300px;top:12.900px" width="10.400" height="10.400" viewBox="0 0 10.400 10.400" stroke="#9a9a9a" stroke-width="1.050"><path d="M0.400 0.400L10 10M10 0.400L0.400 10"/></svg>
 </div>
 <svg class="abs" style="left:473.500px;top:20px" width="16" height="3" viewBox="0 0 16 3" fill="#c8c8c8"><circle cx="1.500" cy="1.500" r="1.200"/><circle cx="8" cy="1.500" r="1.200"/><circle cx="14.500" cy="1.500" r="1.200"/></svg>
</div>
<div class="bc">
<svg style="left:9.5px;margin-left:-1.500px;top:6.800px" width="18" height="13" viewBox="0 0 18 13" fill="none" stroke="#a6a6a6" stroke-width="1.050"><path d="M4 1H18M4 4.700H18M4 8.400H18M4 12H18"/><path d="M0.400 1H1.800M0.400 4.700H1.800M0.400 8.400H1.800M0.400 12H1.800"/></svg>
<svg style="left:47.3px;top:4.800px" width="13" height="17" viewBox="0 0 13 17" fill="none" stroke="#a8a8a8" stroke-width="1.150" stroke-linejoin="miter"><path d="M0.800 0.700H12.200V15.800L6.500 10.600 0.800 15.800Z"/></svg>
<svg style="left:82px;top:6.800px" width="16" height="13" viewBox="0 0 16 13" fill="none" stroke="#a4a4a4" stroke-width="1.100"><path d="M15.600 6.500H1.200M6.800 0.800L1 6.500l5.800 5.700"/></svg>
<svg style="left:115px;top:6.800px" width="16" height="13" viewBox="0 0 16 13" fill="none" stroke="#505050" stroke-width="1.100"><path d="M0.400 6.500H14.800M9.200 0.800L15 6.500l-5.800 5.700"/></svg>
<div class="bt dk" style="left:150.5px">pages</div>
<svg style="left:204px;margin-left:-2px;top:7.800px" width="7" height="12" viewBox="0 0 7 12" fill="none" stroke="#9a9a9a" stroke-width="1.300"><path d="M0.800 0.800L6 6 0.800 11.200"/></svg>
<div class="bt dk" style="left:214.5px">page1</div>
<svg style="left:267.5px;margin-left:-2px;top:7.800px" width="7" height="12" viewBox="0 0 7 12" fill="none" stroke="#9a9a9a" stroke-width="1.300"><path d="M0.800 0.800L6 6 0.800 11.200"/></svg>
<svg style="left:279px;top:5.500px" width="15" height="14.500" viewBox="0 0 15 14.500"><rect width="15" height="14.500" fill="#ffca28"/><text x="4.500" y="12.700" font-family="Liberation Sans,sans-serif" font-weight="700" font-size="9.600" fill="#2f2800" textLength="9.400" lengthAdjust="spacingAndGlyphs">JS</text></svg>
<div class="bt " style="left:303.5px">page1.js</div>
<svg style="left:372.5px;margin-left:-2px;top:7.800px" width="7" height="12" viewBox="0 0 7 12" fill="none" stroke="#9a9a9a" stroke-width="1.300"><path d="M0.800 0.800L6 6 0.800 11.200"/></svg>
<svg style="left:383px;top:4.500px" width="17" height="17" viewBox="0 0 17 17" fill="none" stroke="#a8a8a8" stroke-width="1.200" stroke-linejoin="round"><path d="M15.800 4.200a4.400 4.400 0 0 1-6 4.100L3.400 15.400a1.500 1.500 0 0 1-2.100-2.100L8.600 6.900A4.400 4.400 0 0 1 13.400 1.200L10.800 3.800l0.500 2 2 0.500Z"/></svg>
<div class="bt " style="left:408px">data</div>
<svg style="left:450px;margin-left:-2px;top:7.800px" width="7" height="12" viewBox="0 0 7 12" fill="none" stroke="#9a9a9a" stroke-width="1.300"><path d="M0.800 0.800L6 6 0.800 11.200"/></svg>
<svg style="left:461.5px;top:4.500px" width="17" height="17" viewBox="0 0 17 17" fill="none" stroke="#a8a8a8" stroke-width="1.200" stroke-linejoin="round"><path d="M15.800 4.200a4.400 4.400 0 0 1-6 4.100L3.400 15.400a1.500 1.500 0 0 1-2.100-2.100L8.600 6.900A4.400 4.400 0 0 1 13.400 1.200L10.800 3.800l0.500 2 2 0.500Z"/></svg>
<div class="bt " style="left:486px">arr</div>
</div>
<div class="abs" style="left:86.9px;top:278.0px;width:361.500px;height:21.6px;background:#3c3b3d"></div>
<div class="ig" style="left:87.4px;top:105.2px;height:324.0px"></div>
<div class="ig" style="left:133.8px;top:148.4px;height:43.2px"></div>
<div class="iga" style="left:133.8px;top:213.2px;width:1.100px;height:172.8px"></div>
<div class="iga" style="left:133.8px;top:212.2px;width:81.1px;height:1.100px"></div>
<div class="iga" style="left:133.8px;top:385.5px;width:11.6px;height:1.100px"></div>
<div class="ig" style="left:180.1px;top:321.2px;height:43.2px"></div>
<div class="ln" style="left:-3.500px;top:62.0px">1</div>
<div class="code" style="left:87.4px;top:62.0px"><span class="c">// pages/page1/page1.js</span></div>
<div class="ln" style="left:-3.500px;top:83.6px">2</div>
<span class="fold" style="left:66px;top:90.9px"><svg width="12" height="7" viewBox="0 0 12 7" fill="none" stroke="#c5c5c5" stroke-width="1.100"><path d="M0.600 0.600L6 6 11.400 0.600"/></svg></span>
<div class="code" style="left:87.4px;top:83.6px"><span class="o">Page</span><span class="y">(</span><span class="m">{</span></div>
<div class="ln" style="left:-3.500px;top:105.2px">3</div>
<div class="ln" style="left:-3.500px;top:126.8px">4</div>
<span class="fold" style="left:66px;top:134.1px"><svg width="12" height="7" viewBox="0 0 12 7" fill="none" stroke="#c5c5c5" stroke-width="1.100"><path d="M0.600 0.600L6 6 11.400 0.600"/></svg></span>
<div class="code" style="left:87.4px;top:126.8px">    <span class="c">/**</span></div>
<div class="ln" style="left:-3.500px;top:148.4px">5</div>
<div class="code" style="left:87.4px;top:148.4px">    <span class="c"> * <span class="cj">页面的初始数据</span></span></div>
<div class="ln" style="left:-3.500px;top:170.0px">6</div>
<div class="code" style="left:87.4px;top:170.0px">    <span class="c"> */</span></div>
<div class="ln" style="left:-3.500px;top:191.6px">7</div>
<span class="fold" style="left:66px;top:198.9px"><svg width="12" height="7" viewBox="0 0 12 7" fill="none" stroke="#c5c5c5" stroke-width="1.100"><path d="M0.600 0.600L6 6 11.400 0.600"/></svg></span>
<div class="code" style="left:87.4px;top:191.6px">    <span class="w">data</span><span class="p">:</span> <span class="b">{</span></div>
<div class="ln" style="left:-3.500px;top:213.2px">8</div>
<div class="code" style="left:87.4px;top:213.2px">        <span class="w">msg</span><span class="p">:</span> <span class="s">'hello'</span><span class="p">,</span></div>
<div class="ln" style="left:-3.500px;top:234.8px">9</div>
<div class="code" style="left:87.4px;top:234.8px">        <span class="w">num</span><span class="p">:</span> <span class="s">1</span><span class="p">,</span></div>
<div class="ln" style="left:-3.500px;top:256.4px">10</div>
<div class="code" style="left:87.4px;top:256.4px">        <span class="w">bool</span><span class="p">:</span> <span class="s">false</span><span class="p">,</span></div>
<div class="ln" style="left:-3.500px;top:278.0px">11</div>
<div class="code" style="left:87.4px;top:278.0px">        <span class="w">arr</span><span class="p">:</span> <span class="y bm">[</span><span class="s">0</span><span class="p">,</span> <span class="s">1</span><span class="p">,</span> <span class="s">2</span><span class="y bm">]</span><span class="p">,</span></div>
<div class="ln" style="left:-3.500px;top:299.6px">12</div>
<span class="fold" style="left:66px;top:306.9px"><svg width="12" height="7" viewBox="0 0 12 7" fill="none" stroke="#c5c5c5" stroke-width="1.100"><path d="M0.600 0.600L6 6 11.400 0.600"/></svg></span>
<div class="code" style="left:87.4px;top:299.6px">        <span class="w">obj</span><span class="p">:</span> <span class="y">{</span></div>
<div class="ln" style="left:-3.500px;top:321.2px">13</div>
<div class="code" style="left:87.4px;top:321.2px">            <span class="w">name</span><span class="p">:</span> <span class="s">'Tom'</span><span class="p">,</span></div>
<div class="ln" style="left:-3.500px;top:342.8px">14</div>
<div class="code" style="left:87.4px;top:342.8px">            <span class="w">age</span><span class="p">:</span> <span class="s">11</span></div>
<div class="ln" style="left:-3.500px;top:364.4px">15</div>
<div class="code" style="left:87.4px;top:364.4px">        <span class="y">}</span></div>
<div class="ln" style="left:-3.500px;top:386.0px">16</div>
<div class="code" style="left:87.4px;top:386.0px">    <span class="b">}</span><span class="p">,</span></div>
<div class="ln" style="left:-3.500px;top:407.6px">17</div>
<div class="ln" style="left:-3.500px;top:429.2px">18</div>
<div class="code" style="left:87.4px;top:429.2px"><span class="m">}</span><span class="y">)</span></div>
<svg class="abs" style="left:453.200px;top:63px" width="44" height="46" viewBox="0 0 44 46"><rect x="0" y="24.300" width="42.300" height="2.400" fill="#2a3d59"/><rect x="0.0" y="0.50" width="2.4" height="1.400" fill="#62c36d" opacity="0.38"/><rect x="3.6" y="0.50" width="24.0" height="1.400" fill="#62c36d" opacity="0.38"/><rect x="0.0" y="2.90" width="4.8" height="1.400" fill="#f1934a" opacity="0.38"/><rect x="4.8" y="2.90" width="1.2" height="1.400" fill="#f7c51b" opacity="0.38"/><rect x="6.0" y="2.90" width="1.2" height="1.400" fill="#d86fd6" opacity="0.38"/><rect x="4.8" y="7.70" width="3.6" height="1.400" fill="#62c36d" opacity="0.38"/><rect x="6.0" y="10.10" width="1.2" height="1.400" fill="#62c36d" opacity="0.38"/><rect x="8.4" y="10.10" width="13.9" height="1.400" fill="#62c36d" opacity="0.38"/><rect x="6.0" y="12.50" width="2.4" height="1.400" fill="#62c36d" opacity="0.38"/><rect x="4.8" y="14.90" width="4.8" height="1.400" fill="#e2e2e2" opacity="0.38"/><rect x="9.6" y="14.90" width="1.2" height="1.400" fill="#6cc4f5" opacity="0.38"/><rect x="12.0" y="14.90" width="1.2" height="1.400" fill="#4da3f5" opacity="0.38"/><rect x="9.6" y="17.30" width="3.6" height="1.400" fill="#e2e2e2" opacity="0.38"/><rect x="13.2" y="17.30" width="1.2" height="1.400" fill="#6cc4f5" opacity="0.38"/><rect x="15.6" y="17.30" width="8.4" height="1.400" fill="#f47068" opacity="0.38"/><rect x="24.0" y="17.30" width="1.2" height="1.400" fill="#6cc4f5" opacity="0.38"/><rect x="9.6" y="19.70" width="3.6" height="1.400" fill="#e2e2e2" opacity="0.38"/><rect x="13.2" y="19.70" width="1.2" height="1.400" fill="#6cc4f5" opacity="0.38"/><rect x="15.6" y="19.70" width="1.2" height="1.400" fill="#f47068" opacity="0.38"/><rect x="16.8" y="19.70" width="1.2" height="1.400" fill="#6cc4f5" opacity="0.38"/><rect x="9.6" y="22.10" width="4.8" height="1.400" fill="#e2e2e2" opacity="0.38"/><rect x="14.4" y="22.10" width="1.2" height="1.400" fill="#6cc4f5" opacity="0.38"/><rect x="16.8" y="22.10" width="6.0" height="1.400" fill="#f47068" opacity="0.38"/><rect x="22.8" y="22.10" width="1.2" height="1.400" fill="#6cc4f5" opacity="0.38"/><rect x="9.6" y="24.50" width="3.6" height="1.400" fill="#e2e2e2" opacity="0.38"/><rect x="13.2" y="24.50" width="1.2" height="1.400" fill="#6cc4f5" opacity="0.38"/><rect x="15.6" y="24.50" width="1.2" height="1.400" fill="#f7c51b" opacity="0.38"/><rect x="16.8" y="24.50" width="1.2" height="1.400" fill="#f47068" opacity="0.38"/><rect x="18.0" y="24.50" width="1.2" height="1.400" fill="#6cc4f5" opacity="0.38"/><rect x="20.4" y="24.50" width="1.2" height="1.400" fill="#f47068" opacity="0.38"/><rect x="21.6" y="24.50" width="1.2" height="1.400" fill="#6cc4f5" opacity="0.38"/><rect x="24.0" y="24.50" width="1.2" height="1.400" fill="#f47068" opacity="0.38"/><rect x="25.2" y="24.50" width="1.2" height="1.400" fill="#f7c51b" opacity="0.38"/><rect x="26.4" y="24.50" width="1.2" height="1.400" fill="#6cc4f5" opacity="0.38"/><rect x="9.6" y="26.90" width="3.6" height="1.400" fill="#e2e2e2" opacity="0.38"/><rect x="13.2" y="26.90" width="1.2" height="1.400" fill="#6cc4f5" opacity="0.38"/><rect x="15.6" y="26.90" width="1.2" height="1.400" fill="#f7c51b" opacity="0.38"/><rect x="14.4" y="29.30" width="4.8" height="1.400" fill="#e2e2e2" opacity="0.38"/><rect x="19.2" y="29.30" width="1.2" height="1.400" fill="#6cc4f5" opacity="0.38"/><rect x="21.6" y="29.30" width="6.0" height="1.400" fill="#f47068" opacity="0.38"/><rect x="27.6" y="29.30" width="1.2" height="1.400" fill="#6cc4f5" opacity="0.38"/><rect x="14.4" y="31.70" width="3.6" height="1.400" fill="#e2e2e2" opacity="0.38"/><rect x="18.0" y="31.70" width="1.2" height="1.400" fill="#6cc4f5" opacity="0.38"/><rect x="20.4" y="31.70" width="2.4" height="1.400" fill="#f47068" opacity="0.38"/><rect x="9.6" y="34.10" width="1.2" height="1.400" fill="#f7c51b" opacity="0.38"/><rect x="4.8" y="36.50" width="1.2" height="1.400" fill="#4da3f5" opacity="0.38"/><rect x="6.0" y="36.50" width="1.2" height="1.400" fill="#6cc4f5" opacity="0.38"/><rect x="0.0" y="41.30" width="1.2" height="1.400" fill="#d86fd6" opacity="0.38"/><rect x="1.2" y="41.30" width="1.2" height="1.400" fill="#f7c51b" opacity="0.38"/></svg>
<div class="abs" style="left:495.500px;top:62px;width:1px;height:724px;background:#39383b"></div>
<svg class="abs" style="left:496px;top:212.100px" width="16" height="16" viewBox="0 0 16 16" fill="#9c9a9d"><rect x="0" y="0" width="16" height="2"/><rect x="5.200" y="0" width="5.800" height="15.800"/></svg>
</div>
<div class="abs" style="left:1218px;top:76px;width:1px;height:786px;background:#3a393c"></div>
<div class="abs" style="left:1219px;top:76px;width:1.500px;height:786px;background:#29282a"></div>
<div class="ed" style="left:1220px;width:495px">
<div class="tabs">
 <div class="tab" style="width:154.500px">
  <svg class="abs" style="left:13px;top:8.5px" width="14" height="17" viewBox="0 0 14 17"><path d="M1.600 0.400H8.600L13.600 5.400V15.200A1.400 1.400 0 0 1 12.200 16.600H1.600A1.400 1.400 0 0 1 0.200 15.200V1.800A1.400 1.400 0 0 1 1.600 0.400Z" fill="#78b846"/><path d="M8.400 0.400V5.600H13.600Z" fill="#2b3a1f"/><path d="M5.300 9L3 11.200 5.300 13.400M8.700 9L11 11.200 8.700 13.400" stroke="#1f2b16" stroke-width="1.500" fill="none"/></svg>
  <div class="tn" style="left:37px;color:#fff;letter-spacing:-0.050px">page1.wxml</div>
  <svg class="abs" style="left:130px;top:12.900px" width="10.400" height="10.400" viewBox="0 0 10.400 10.400" stroke="#e8e8e8" stroke-width="1.200"><path d="M0.400 0.400L10 10M10 0.400L0.400 10"/></svg>
 </div>
 <svg class="abs" style="left:435px;top:14px" width="14.500" height="14.800" viewBox="0 0 16 16" fill="none" stroke="#d0d0d0" stroke-width="1.350"><rect x="0.700" y="0.700" width="14.600" height="14.600" rx="1.200"/><path d="M8 0.700V15.300"/></svg>
 <svg class="abs" style="left:472px;top:20px" width="16" height="3" viewBox="0 0 16 3" fill="#c8c8c8"><circle cx="1.500" cy="1.500" r="1.200"/><circle cx="8" cy="1.500" r="1.200"/><circle cx="14.500" cy="1.500" r="1.200"/></svg>
</div>
<div class="bc" style="z-index:3;box-shadow:0 3px 4px rgba(0,0,0,.55)">
<svg style="left:8px;margin-left:-1.500px;top:6.800px" width="18" height="13" viewBox="0 0 18 13" fill="none" stroke="#a6a6a6" stroke-width="1.050"><path d="M4 1H18M4 4.700H18M4 8.400H18M4 12H18"/><path d="M0.400 1H1.800M0.400 4.700H1.800M0.400 8.400H1.800M0.400 12H1.800"/></svg>
<svg style="left:45.3px;top:4.800px" width="13" height="17" viewBox="0 0 13 17" fill="none" stroke="#a8a8a8" stroke-width="1.150" stroke-linejoin="miter"><path d="M0.800 0.700H12.200V15.800L6.500 10.600 0.800 15.800Z"/></svg>
<svg style="left:80px;top:6.800px" width="16" height="13" viewBox="0 0 16 13" fill="none" stroke="#a4a4a4" stroke-width="1.100"><path d="M15.600 6.500H1.200M6.800 0.800L1 6.500l5.800 5.700"/></svg>
<svg style="left:113.5px;top:6.800px" width="16" height="13" viewBox="0 0 16 13" fill="none" stroke="#505050" stroke-width="1.100"><path d="M0.400 6.500H14.800M9.200 0.800L15 6.500l-5.800 5.700"/></svg>
<div class="bt dk" style="left:149px">pages</div>
<svg style="left:202.5px;margin-left:-2px;top:7.800px" width="7" height="12" viewBox="0 0 7 12" fill="none" stroke="#9a9a9a" stroke-width="1.300"><path d="M0.800 0.800L6 6 0.800 11.200"/></svg>
<div class="bt dk" style="left:213px">page1</div>
<svg style="left:264.5px;margin-left:-2px;top:7.800px" width="7" height="12" viewBox="0 0 7 12" fill="none" stroke="#9a9a9a" stroke-width="1.300"><path d="M0.800 0.800L6 6 0.800 11.200"/></svg>
<svg style="left:278.3px;top:5px" width="14" height="17" viewBox="0 0 14 17"><path d="M1.600 0.400H8.600L13.600 5.400V15.200A1.400 1.400 0 0 1 12.200 16.600H1.600A1.400 1.400 0 0 1 0.200 15.200V1.800A1.400 1.400 0 0 1 1.600 0.400Z" fill="#78b846"/><path d="M8.400 0.400V5.600H13.600Z" fill="#2b3a1f"/><path d="M5.300 9L3 11.200 5.300 13.400M8.700 9L11 11.200 8.700 13.400" stroke="#1f2b16" stroke-width="1.500" fill="none"/></svg>
<div class="bt " style="left:302px"><span style="letter-spacing:0">page1.wxml</span></div>
<svg style="left:394px;margin-left:-2px;top:7.800px" width="7" height="12" viewBox="0 0 7 12" fill="none" stroke="#9a9a9a" stroke-width="1.300"><path d="M0.800 0.800L6 6 0.800 11.200"/></svg>
<svg style="left:405.5px;top:6px" width="17.500" height="14.500" viewBox="0 0 17.500 14.500" fill="none" stroke="#3e92e8" stroke-width="1.100" stroke-linejoin="round"><path d="M0.700 5.800L11.300 0.700 16.800 3.800 6.800 9.200Z"/><path d="M0.700 5.800V10.200L6.800 13.800V9.200"/><path d="M6.800 13.800L16.800 8.400V3.800"/></svg>
<div class="bt " style="left:431px">view</div>
</div>
<div class="abs" style="left:84.9px;top:643.2px;width:362px;height:21.6px;background:#3c3b3d"></div>
<div class="abs" style="left:166.5px;top:663.6px;width:162.3px;height:1.200px;background:#7d5a80"></div>
<div class="ig" style="left:85.4px;top:340.8px;height:129.6px"></div>
<div class="ig" style="left:131.8px;top:384.0px;height:86.4px"></div>
<div class="ln" style="left:-5.500px;top:60.0px">10</div>
<div class="code" style="left:85.4px;top:60.0px"><span class="t">&lt;</span><span class="t">view</span><span class="t">&gt;</span><span class="y">{</span><span class="m">{</span><span class="w">bool</span><span class="m">}</span><span class="y">}</span><span class="t">&lt;/</span><span class="t">view</span><span class="t">&gt;</span></div>
<div class="ln" style="left:-5.500px;top:81.6px">11</div>
<div class="code" style="left:85.4px;top:81.6px"><span class="t">&lt;</span><span class="t">view</span><span class="t">&gt;</span><span class="y">{</span><span class="m">{</span><span class="w">arr</span><span class="m">}</span><span class="y">}</span><span class="t">&lt;/</span><span class="t">view</span><span class="t">&gt;</span></div>
<div class="ln" style="left:-5.500px;top:103.2px">12</div>
<div class="code" style="left:85.4px;top:103.2px"><span class="t">&lt;</span><span class="t">view</span><span class="t">&gt;</span><span class="y">{</span><span class="m">{</span><span class="w">arr[1]</span><span class="m">}</span><span class="y">}</span><span class="t">&lt;/</span><span class="t">view</span><span class="t">&gt;</span></div>
<div class="ln" style="left:-5.500px;top:124.8px">13</div>
<div class="code" style="left:85.4px;top:124.8px"><span class="t">&lt;</span><span class="t">view</span><span class="t">&gt;</span><span class="y">{</span><span class="m">{</span><span class="w">obj.name</span><span class="m">}</span><span class="y">}</span><span class="t">&lt;/</span><span class="t">view</span><span class="t">&gt;</span></div>
<div class="ln" style="left:-5.500px;top:146.4px">14</div>
<div class="code" style="left:85.4px;top:146.4px"><span class="t">&lt;</span><span class="t">view</span><span class="t">&gt;</span><span class="y">{</span><span class="m">{</span><span class="w">obj.age</span><span class="m">}</span><span class="y">}</span><span class="t">&lt;/</span><span class="t">view</span><span class="t">&gt;</span></div>
<div class="ln" style="left:-5.500px;top:168.0px">15</div>
<div class="ln" style="left:-5.500px;top:189.6px">16</div>
<div class="code" style="left:85.4px;top:189.6px"><span class="y">&lt;!<span class="hy">-</span><span class="hy">-</span></span><span class="c"> 2. <span class="cj">在属性中使用，要放到双引号</span></span></div>
<div class="code" style="left:85.4px;top:211.2px"><span class="c"><span class="cj">里面，双引号和大括号不要有空格</span> </span><span class="y"><span class="hy">-</span><span class="hy">-</span>&gt;</span></div>
<div class="ln" style="left:-5.500px;top:232.8px">17</div>
<div class="code" style="left:85.4px;top:232.8px"><span class="t">&lt;view</span> <span class="a">data<span class="hy">-</span>msg</span><span class="t">="</span><span class="y">{</span><span class="m">{</span><span class="s">msg</span><span class="m">}</span><span class="y">}</span><span class="t">"&gt;</span><span class="w"><span class="cj">在组件</span></span></div>
<div class="code" style="left:85.4px;top:254.4px"><span class="w"><span class="cj">属性中使用</span></span><span class="t">&lt;/view&gt;</span></div>
<div class="ln" style="left:-5.500px;top:276.0px">18</div>
<div class="code" style="left:85.4px;top:276.0px"><span class="t">&lt;checkbox</span> <span class="a">checked</span><span class="t">="</span><span class="y">{</span><span class="m">{</span><span class="s">bool</span><span class="m">}</span><span class="y">}</span><span class="t">"</span> <span class="t">/&gt;</span></div>
<div class="ln" style="left:-5.500px;top:297.6px">19</div>
<div class="ln" style="left:-5.500px;top:319.2px">20</div>
<span class="fold" style="left:65px;top:326.5px"><svg width="12" height="7" viewBox="0 0 12 7" fill="none" stroke="#c5c5c5" stroke-width="1.100"><path d="M0.600 0.600L6 6 11.400 0.600"/></svg></span>
<div class="code" style="left:85.4px;top:319.2px"><span class="y">&lt;!<span class="hy">-</span><span class="hy">-</span></span></div>
<div class="ln" style="left:-5.500px;top:340.8px">21</div>
<div class="code" style="left:85.4px;top:340.8px">    <span class="c">3. <span class="cj">运算</span></span></div>
<div class="ln" style="left:-5.500px;top:362.4px">22</div>
<div class="code" style="left:85.4px;top:362.4px">    <span class="c"><span class="cj">可以在</span> </span><span class="m">{</span><span class="b2">{</span><span class="b2">}</span><span class="m">}</span><span class="c"> <span class="cj">写表达式</span></span></div>
<div class="ln" style="left:-5.500px;top:384.0px">23</div>
<div class="code" style="left:85.4px;top:384.0px">        <span class="c"><span class="cj">表达式：简单的运算，</span> <span class="cj">三元运</span></span></div>
<div class="code" style="left:85.4px;top:405.6px">        <span class="c"><span class="cj">算，逻辑判断等等。。</span></span></div>
<div class="ln" style="left:-5.500px;top:427.2px">24</div>
<div class="code" style="left:85.4px;top:427.2px">        <span class="c"><span class="cj">语句：</span> <span class="cj">比较复杂的结构，</span></span></div>
<div class="code" style="left:85.4px;top:448.8px">        <span class="c">if, for...</span></div>
<div class="ln" style="left:-5.500px;top:470.4px">25</div>
<div class="code" style="left:85.4px;top:470.4px"><span class="y"><span class="hy">-</span><span class="hy">-</span>&gt;</span></div>
<div class="ln" style="left:-5.500px;top:492.0px">26</div>
<div class="code" style="left:85.4px;top:492.0px"><span class="t">&lt;</span><span class="t">view</span><span class="t">&gt;</span><span class="y">{</span><span class="m">{</span><span class="w"> num === 1 ? '<span class="cj">一</span>' : 0 </span><span class="m">}</span></div>
<div class="code" style="left:85.4px;top:513.6px"><span class="y">}</span><span class="t">&lt;/</span><span class="t">view</span><span class="t">&gt;</span></div>
<div class="ln" style="left:-5.500px;top:535.2px">27</div>
<div class="code" style="left:85.4px;top:535.2px"><span class="t">&lt;</span><span class="t">view</span><span class="t">&gt;</span><span class="y">{</span><span class="m">{</span><span class="w"> num + 3 </span><span class="m">}</span><span class="y">}</span><span class="t">&lt;/</span><span class="t">view</span><span class="t">&gt;</span></div>
<div class="ln" style="left:-5.500px;top:556.8px">28</div>
<div class="code" style="left:85.4px;top:556.8px"><span class="t">&lt;</span><span class="t">view</span><span class="t">&gt;</span><span class="y">{</span><span class="m">{</span><span class="w"> msg + ' ' + obj.name </span><span class="m">}</span></div>
<div class="code" style="left:85.4px;top:578.4px"><span class="y">}</span><span class="t">&lt;/</span><span class="t">view</span><span class="t">&gt;</span></div>
<div class="ln" style="left:-5.500px;top:600.0px">29</div>
<div class="code" style="left:85.4px;top:600.0px"><span class="t">&lt;view</span> <span class="a">wx:if</span><span class="t">="</span><span class="y">{</span><span class="m">{</span><span class="s">num === 1</span><span class="m">}</span><span class="y">}</span><span class="t">"&gt;</span><span class="y">{</span></div>
<div class="code" style="left:85.4px;top:621.6px"><span class="m">{</span><span class="w">msg</span><span class="m">}</span><span class="y">}</span><span class="t">&lt;/</span><span class="t">view</span><span class="t">&gt;</span></div>
<div class="ln" style="left:-5.500px;top:643.2px">30</div>
<div class="code" style="left:85.4px;top:643.2px"><span class="t">&lt;</span><span class="t">view</span><span class="t">&gt;</span><span class="y">{</span><span class="m bm2">{</span><span class="w"> [msg, num</span><span class="cur"></span><span class="w">] </span><span class="m bm2">}</span><span class="y">}</span><span class="t">&lt;/</span><span class="t">view</span><span class="t">&gt;</span></div>
<svg class="abs" style="left:453px;top:62px" width="43" height="100" viewBox="0 0 43 100"><rect x="0" y="91.9" width="43" height="2.400" fill="#1f4a78"/><rect x="0.0" y="0.40" width="4.5" height="1.400" fill="#f7c51b" opacity="0.42"/><rect x="5.6" y="0.40" width="2.2" height="1.400" fill="#62c36d" opacity="0.42"/><rect x="9.0" y="0.40" width="27.9" height="1.400" fill="#62c36d" opacity="0.42"/><rect x="0.0" y="2.82" width="11.2" height="1.400" fill="#62c36d" opacity="0.42"/><rect x="12.3" y="2.82" width="3.4" height="1.400" fill="#f7c51b" opacity="0.42"/><rect x="0.0" y="5.24" width="1.1" height="1.400" fill="#69c3f5" opacity="0.42"/><rect x="1.1" y="5.24" width="4.5" height="1.400" fill="#69c3f5" opacity="0.42"/><rect x="5.6" y="5.24" width="1.1" height="1.400" fill="#69c3f5" opacity="0.42"/><rect x="6.7" y="5.24" width="1.1" height="1.400" fill="#f7c51b" opacity="0.42"/><rect x="7.8" y="5.24" width="1.1" height="1.400" fill="#d86fd6" opacity="0.42"/><rect x="9.0" y="5.24" width="3.4" height="1.400" fill="#e2e2e2" opacity="0.42"/><rect x="12.3" y="5.24" width="1.1" height="1.400" fill="#d86fd6" opacity="0.42"/><rect x="13.4" y="5.24" width="1.1" height="1.400" fill="#f7c51b" opacity="0.42"/><rect x="14.6" y="5.24" width="2.2" height="1.400" fill="#69c3f5" opacity="0.42"/><rect x="16.8" y="5.24" width="4.5" height="1.400" fill="#69c3f5" opacity="0.42"/><rect x="21.3" y="5.24" width="1.1" height="1.400" fill="#69c3f5" opacity="0.42"/><rect x="0.0" y="10.08" width="4.5" height="1.400" fill="#f7c51b" opacity="0.42"/><rect x="5.6" y="10.08" width="4.8" height="1.400" fill="#62c36d" opacity="0.42"/><rect x="11.6" y="10.08" width="7.4" height="1.400" fill="#62c36d" opacity="0.42"/><rect x="20.1" y="10.08" width="3.7" height="1.400" fill="#62c36d" opacity="0.42"/><rect x="25.0" y="10.08" width="3.7" height="1.400" fill="#62c36d" opacity="0.42"/><rect x="29.8" y="10.08" width="3.7" height="1.400" fill="#62c36d" opacity="0.42"/><rect x="0.0" y="12.50" width="13.0" height="1.400" fill="#62c36d" opacity="0.42"/><rect x="14.1" y="12.50" width="3.4" height="1.400" fill="#f7c51b" opacity="0.42"/><rect x="0.0" y="14.92" width="1.1" height="1.400" fill="#69c3f5" opacity="0.42"/><rect x="1.1" y="14.92" width="4.5" height="1.400" fill="#69c3f5" opacity="0.42"/><rect x="5.6" y="14.92" width="1.1" height="1.400" fill="#69c3f5" opacity="0.42"/><rect x="6.7" y="14.92" width="1.1" height="1.400" fill="#f7c51b" opacity="0.42"/><rect x="7.8" y="14.92" width="1.1" height="1.400" fill="#d86fd6" opacity="0.42"/><rect x="9.0" y="14.92" width="3.4" height="1.400" fill="#e2e2e2" opacity="0.42"/><rect x="12.3" y="14.92" width="1.1" height="1.400" fill="#d86fd6" opacity="0.42"/><rect x="13.4" y="14.92" width="1.1" height="1.400" fill="#f7c51b" opacity="0.42"/><rect x="14.6" y="14.92" width="2.2" height="1.400" fill="#69c3f5" opacity="0.42"/><rect x="16.8" y="14.92" width="4.5" height="1.400" fill="#69c3f5" opacity="0.42"/><rect x="21.3" y="14.92" width="1.1" height="1.400" fill="#69c3f5" opacity="0.42"/><rect x="0.0" y="19.76" width="4.5" height="1.400" fill="#f7c51b" opacity="0.42"/><rect x="5.6" y="19.76" width="2.2" height="1.400" fill="#62c36d" opacity="0.42"/><rect x="9.0" y="19.76" width="3.7" height="1.400" fill="#62c36d" opacity="0.42"/><rect x="13.8" y="19.76" width="3.4" height="1.400" fill="#f7c51b" opacity="0.42"/><rect x="0.0" y="22.18" width="1.1" height="1.400" fill="#69c3f5" opacity="0.42"/><rect x="1.1" y="22.18" width="4.5" height="1.400" fill="#69c3f5" opacity="0.42"/><rect x="5.6" y="22.18" width="1.1" height="1.400" fill="#69c3f5" opacity="0.42"/><rect x="6.7" y="22.18" width="1.1" height="1.400" fill="#f7c51b" opacity="0.42"/><rect x="7.8" y="22.18" width="1.1" height="1.400" fill="#d86fd6" opacity="0.42"/><rect x="9.0" y="22.18" width="3.4" height="1.400" fill="#e2e2e2" opacity="0.42"/><rect x="12.3" y="22.18" width="1.1" height="1.400" fill="#d86fd6" opacity="0.42"/><rect x="13.4" y="22.18" width="1.1" height="1.400" fill="#f7c51b" opacity="0.42"/><rect x="14.6" y="22.18" width="2.2" height="1.400" fill="#69c3f5" opacity="0.42"/><rect x="16.8" y="22.18" width="4.5" height="1.400" fill="#69c3f5" opacity="0.42"/><rect x="21.3" y="22.18" width="1.1" height="1.400" fill="#69c3f5" opacity="0.42"/><rect x="0.0" y="24.60" width="1.1" height="1.400" fill="#69c3f5" opacity="0.42"/><rect x="1.1" y="24.60" width="4.5" height="1.400" fill="#69c3f5" opacity="0.42"/><rect x="5.6" y="24.60" width="1.1" height="1.400" fill="#69c3f5" opacity="0.42"/><rect x="6.7" y="24.60" width="1.1" height="1.400" fill="#f7c51b" opacity="0.42"/><rect x="7.8" y="24.60" width="1.1" height="1.400" fill="#d86fd6" opacity="0.42"/><rect x="9.0" y="24.60" width="3.4" height="1.400" fill="#e2e2e2" opacity="0.42"/><rect x="12.3" y="24.60" width="1.1" height="1.400" fill="#d86fd6" opacity="0.42"/><rect x="13.4" y="24.60" width="1.1" height="1.400" fill="#f7c51b" opacity="0.42"/><rect x="14.6" y="24.60" width="2.2" height="1.400" fill="#69c3f5" opacity="0.42"/><rect x="16.8" y="24.60" width="4.5" height="1.400" fill="#69c3f5" opacity="0.42"/><rect x="21.3" y="24.60" width="1.1" height="1.400" fill="#69c3f5" opacity="0.42"/><rect x="0.0" y="27.02" width="1.1" height="1.400" fill="#69c3f5" opacity="0.42"/><rect x="1.1" y="27.02" width="4.5" height="1.400" fill="#69c3f5" opacity="0.42"/><rect x="5.6" y="27.02" width="1.1" height="1.400" fill="#69c3f5" opacity="0.42"/><rect x="6.7" y="27.02" width="1.1" height="1.400" fill="#f7c51b" opacity="0.42"/><rect x="7.8" y="27.02" width="1.1" height="1.400" fill="#d86fd6" opacity="0.42"/><rect x="9.0" y="27.02" width="4.5" height="1.400" fill="#e2e2e2" opacity="0.42"/><rect x="13.4" y="27.02" width="1.1" height="1.400" fill="#d86fd6" opacity="0.42"/><rect x="14.6" y="27.02" width="1.1" height="1.400" fill="#f7c51b" opacity="0.42"/><rect x="15.7" y="27.02" width="2.2" height="1.400" fill="#69c3f5" opacity="0.42"/><rect x="17.9" y="27.02" width="4.5" height="1.400" fill="#69c3f5" opacity="0.42"/><rect x="22.4" y="27.02" width="1.1" height="1.400" fill="#69c3f5" opacity="0.42"/><rect x="0.0" y="29.44" width="1.1" height="1.400" fill="#69c3f5" opacity="0.42"/><rect x="1.1" y="29.44" width="4.5" height="1.400" fill="#69c3f5" opacity="0.42"/><rect x="5.6" y="29.44" width="1.1" height="1.400" fill="#69c3f5" opacity="0.42"/><rect x="6.7" y="29.44" width="1.1" height="1.400" fill="#f7c51b" opacity="0.42"/><rect x="7.8" y="29.44" width="1.1" height="1.400" fill="#d86fd6" opacity="0.42"/><rect x="9.0" y="29.44" width="3.4" height="1.400" fill="#e2e2e2" opacity="0.42"/><rect x="12.3" y="29.44" width="1.1" height="1.400" fill="#d86fd6" opacity="0.42"/><rect x="13.4" y="29.44" width="1.1" height="1.400" fill="#f7c51b" opacity="0.42"/><rect x="14.6" y="29.44" width="2.2" height="1.400" fill="#69c3f5" opacity="0.42"/><rect x="16.8" y="29.44" width="4.5" height="1.400" fill="#69c3f5" opacity="0.42"/><rect x="21.3" y="29.44" width="1.1" height="1.400" fill="#69c3f5" opacity="0.42"/><rect x="0.0" y="31.86" width="1.1" height="1.400" fill="#69c3f5" opacity="0.42"/><rect x="1.1" y="31.86" width="4.5" height="1.400" fill="#69c3f5" opacity="0.42"/><rect x="5.6" y="31.86" width="1.1" height="1.400" fill="#69c3f5" opacity="0.42"/><rect x="6.7" y="31.86" width="1.1" height="1.400" fill="#f7c51b" opacity="0.42"/><rect x="7.8" y="31.86" width="1.1" height="1.400" fill="#d86fd6" opacity="0.42"/><rect x="9.0" y="31.86" width="6.7" height="1.400" fill="#e2e2e2" opacity="0.42"/><rect x="15.7" y="31.86" width="1.1" height="1.400" fill="#d86fd6" opacity="0.42"/><rect x="16.8" y="31.86" width="1.1" height="1.400" fill="#f7c51b" opacity="0.42"/><rect x="17.9" y="31.86" width="2.2" height="1.400" fill="#69c3f5" opacity="0.42"/><rect x="20.2" y="31.86" width="4.5" height="1.400" fill="#69c3f5" opacity="0.42"/><rect x="24.6" y="31.86" width="1.1" height="1.400" fill="#69c3f5" opacity="0.42"/><rect x="0.0" y="34.28" width="1.1" height="1.400" fill="#69c3f5" opacity="0.42"/><rect x="1.1" y="34.28" width="4.5" height="1.400" fill="#69c3f5" opacity="0.42"/><rect x="5.6" y="34.28" width="1.1" height="1.400" fill="#69c3f5" opacity="0.42"/><rect x="6.7" y="34.28" width="1.1" height="1.400" fill="#f7c51b" opacity="0.42"/><rect x="7.8" y="34.28" width="1.1" height="1.400" fill="#d86fd6" opacity="0.42"/><rect x="9.0" y="34.28" width="9.0" height="1.400" fill="#e2e2e2" opacity="0.42"/><rect x="17.9" y="34.28" width="1.1" height="1.400" fill="#d86fd6" opacity="0.42"/><rect x="19.0" y="34.28" width="1.1" height="1.400" fill="#f7c51b" opacity="0.42"/><rect x="20.2" y="34.28" width="2.2" height="1.400" fill="#69c3f5" opacity="0.42"/><rect x="22.4" y="34.28" width="4.5" height="1.400" fill="#69c3f5" opacity="0.42"/><rect x="26.9" y="34.28" width="1.1" height="1.400" fill="#69c3f5" opacity="0.42"/><rect x="0.0" y="36.70" width="1.1" height="1.400" fill="#69c3f5" opacity="0.42"/><rect x="1.1" y="36.70" width="4.5" height="1.400" fill="#69c3f5" opacity="0.42"/><rect x="5.6" y="36.70" width="1.1" height="1.400" fill="#69c3f5" opacity="0.42"/><rect x="6.7" y="36.70" width="1.1" height="1.400" fill="#f7c51b" opacity="0.42"/><rect x="7.8" y="36.70" width="1.1" height="1.400" fill="#d86fd6" opacity="0.42"/><rect x="9.0" y="36.70" width="7.8" height="1.400" fill="#e2e2e2" opacity="0.42"/><rect x="16.8" y="36.70" width="1.1" height="1.400" fill="#d86fd6" opacity="0.42"/><rect x="17.9" y="36.70" width="1.1" height="1.400" fill="#f7c51b" opacity="0.42"/><rect x="19.0" y="36.70" width="2.2" height="1.400" fill="#69c3f5" opacity="0.42"/><rect x="21.3" y="36.70" width="4.5" height="1.400" fill="#69c3f5" opacity="0.42"/><rect x="25.8" y="36.70" width="1.1" height="1.400" fill="#69c3f5" opacity="0.42"/><rect x="0.0" y="41.54" width="4.5" height="1.400" fill="#f7c51b" opacity="0.42"/><rect x="5.6" y="41.54" width="2.2" height="1.400" fill="#62c36d" opacity="0.42"/><rect x="9.0" y="41.54" width="24.2" height="1.400" fill="#62c36d" opacity="0.42"/><rect x="0.0" y="43.96" width="27.9" height="1.400" fill="#62c36d" opacity="0.42"/><rect x="29.0" y="43.96" width="3.4" height="1.400" fill="#f7c51b" opacity="0.42"/><rect x="0.0" y="46.38" width="5.6" height="1.400" fill="#69c3f5" opacity="0.42"/><rect x="6.7" y="46.38" width="9.0" height="1.400" fill="#c4c4c4" opacity="0.42"/><rect x="15.7" y="46.38" width="2.2" height="1.400" fill="#69c3f5" opacity="0.42"/><rect x="17.9" y="46.38" width="1.1" height="1.400" fill="#f7c51b" opacity="0.42"/><rect x="19.0" y="46.38" width="1.1" height="1.400" fill="#d86fd6" opacity="0.42"/><rect x="20.2" y="46.38" width="3.4" height="1.400" fill="#f47068" opacity="0.42"/><rect x="23.5" y="46.38" width="1.1" height="1.400" fill="#d86fd6" opacity="0.42"/><rect x="24.6" y="46.38" width="1.1" height="1.400" fill="#f7c51b" opacity="0.42"/><rect x="25.8" y="46.38" width="2.2" height="1.400" fill="#69c3f5" opacity="0.42"/><rect x="28.0" y="46.38" width="5.6" height="1.400" fill="#e2e2e2" opacity="0.42"/><rect x="0.0" y="48.80" width="9.3" height="1.400" fill="#e2e2e2" opacity="0.42"/><rect x="9.3" y="48.80" width="7.8" height="1.400" fill="#69c3f5" opacity="0.42"/><rect x="0.0" y="51.22" width="10.1" height="1.400" fill="#69c3f5" opacity="0.42"/><rect x="11.2" y="51.22" width="7.8" height="1.400" fill="#c4c4c4" opacity="0.42"/><rect x="19.0" y="51.22" width="2.2" height="1.400" fill="#69c3f5" opacity="0.42"/><rect x="21.3" y="51.22" width="1.1" height="1.400" fill="#f7c51b" opacity="0.42"/><rect x="22.4" y="51.22" width="1.1" height="1.400" fill="#d86fd6" opacity="0.42"/><rect x="23.5" y="51.22" width="4.5" height="1.400" fill="#f47068" opacity="0.42"/><rect x="28.0" y="51.22" width="1.1" height="1.400" fill="#d86fd6" opacity="0.42"/><rect x="29.1" y="51.22" width="1.1" height="1.400" fill="#f7c51b" opacity="0.42"/><rect x="30.2" y="51.22" width="1.1" height="1.400" fill="#69c3f5" opacity="0.42"/><rect x="32.5" y="51.22" width="2.2" height="1.400" fill="#69c3f5" opacity="0.42"/><rect x="0.0" y="56.06" width="4.5" height="1.400" fill="#f7c51b" opacity="0.42"/><rect x="4.5" y="58.48" width="2.2" height="1.400" fill="#62c36d" opacity="0.42"/><rect x="7.8" y="58.48" width="3.7" height="1.400" fill="#62c36d" opacity="0.42"/><rect x="4.5" y="60.90" width="5.6" height="1.400" fill="#62c36d" opacity="0.42"/><rect x="11.2" y="60.90" width="1.1" height="1.400" fill="#d86fd6" opacity="0.42"/><rect x="12.3" y="60.90" width="1.1" height="1.400" fill="#5cb6f8" opacity="0.42"/><rect x="13.4" y="60.90" width="1.1" height="1.400" fill="#5cb6f8" opacity="0.42"/><rect x="14.5" y="60.90" width="1.1" height="1.400" fill="#d86fd6" opacity="0.42"/><rect x="16.8" y="60.90" width="7.4" height="1.400" fill="#62c36d" opacity="0.42"/><rect x="9.0" y="63.32" width="18.6" height="1.400" fill="#62c36d" opacity="0.42"/><rect x="28.7" y="63.32" width="5.6" height="1.400" fill="#62c36d" opacity="0.42"/><rect x="9.0" y="65.74" width="18.6" height="1.400" fill="#62c36d" opacity="0.42"/><rect x="9.0" y="68.16" width="5.6" height="1.400" fill="#62c36d" opacity="0.42"/><rect x="15.7" y="68.16" width="14.9" height="1.400" fill="#62c36d" opacity="0.42"/><rect x="9.0" y="70.58" width="3.4" height="1.400" fill="#62c36d" opacity="0.42"/><rect x="13.4" y="70.58" width="6.7" height="1.400" fill="#62c36d" opacity="0.42"/><rect x="0.0" y="73.00" width="3.4" height="1.400" fill="#f7c51b" opacity="0.42"/><rect x="0.0" y="75.42" width="1.1" height="1.400" fill="#69c3f5" opacity="0.42"/><rect x="1.1" y="75.42" width="4.5" height="1.400" fill="#69c3f5" opacity="0.42"/><rect x="5.6" y="75.42" width="1.1" height="1.400" fill="#69c3f5" opacity="0.42"/><rect x="6.7" y="75.42" width="1.1" height="1.400" fill="#f7c51b" opacity="0.42"/><rect x="7.8" y="75.42" width="1.1" height="1.400" fill="#d86fd6" opacity="0.42"/><rect x="10.1" y="75.42" width="3.4" height="1.400" fill="#e2e2e2" opacity="0.42"/><rect x="14.6" y="75.42" width="3.4" height="1.400" fill="#e2e2e2" opacity="0.42"/><rect x="19.0" y="75.42" width="1.1" height="1.400" fill="#e2e2e2" opacity="0.42"/><rect x="21.3" y="75.42" width="1.1" height="1.400" fill="#e2e2e2" opacity="0.42"/><rect x="23.5" y="75.42" width="4.1" height="1.400" fill="#e2e2e2" opacity="0.42"/><rect x="28.7" y="75.42" width="1.1" height="1.400" fill="#e2e2e2" opacity="0.42"/><rect x="31.0" y="75.42" width="1.1" height="1.400" fill="#e2e2e2" opacity="0.42"/><rect x="33.2" y="75.42" width="1.1" height="1.400" fill="#d86fd6" opacity="0.42"/><rect x="0.0" y="77.84" width="1.1" height="1.400" fill="#f7c51b" opacity="0.42"/><rect x="1.1" y="77.84" width="2.2" height="1.400" fill="#69c3f5" opacity="0.42"/><rect x="3.4" y="77.84" width="4.5" height="1.400" fill="#69c3f5" opacity="0.42"/><rect x="7.8" y="77.84" width="1.1" height="1.400" fill="#69c3f5" opacity="0.42"/><rect x="0.0" y="80.26" width="1.1" height="1.400" fill="#69c3f5" opacity="0.42"/><rect x="1.1" y="80.26" width="4.5" height="1.400" fill="#69c3f5" opacity="0.42"/><rect x="5.6" y="80.26" width="1.1" height="1.400" fill="#69c3f5" opacity="0.42"/><rect x="6.7" y="80.26" width="1.1" height="1.400" fill="#f7c51b" opacity="0.42"/><rect x="7.8" y="80.26" width="1.1" height="1.400" fill="#d86fd6" opacity="0.42"/><rect x="10.1" y="80.26" width="3.4" height="1.400" fill="#e2e2e2" opacity="0.42"/><rect x="14.6" y="80.26" width="1.1" height="1.400" fill="#e2e2e2" opacity="0.42"/><rect x="16.8" y="80.26" width="1.1" height="1.400" fill="#e2e2e2" opacity="0.42"/><rect x="19.0" y="80.26" width="1.1" height="1.400" fill="#d86fd6" opacity="0.42"/><rect x="20.2" y="80.26" width="1.1" height="1.400" fill="#f7c51b" opacity="0.42"/><rect x="21.3" y="80.26" width="2.2" height="1.400" fill="#69c3f5" opacity="0.42"/><rect x="23.5" y="80.26" width="4.5" height="1.400" fill="#69c3f5" opacity="0.42"/><rect x="28.0" y="80.26" width="1.1" height="1.400" fill="#69c3f5" opacity="0.42"/><rect x="0.0" y="82.68" width="1.1" height="1.400" fill="#69c3f5" opacity="0.42"/><rect x="1.1" y="82.68" width="4.5" height="1.400" fill="#69c3f5" opacity="0.42"/><rect x="5.6" y="82.68" width="1.1" height="1.400" fill="#69c3f5" opacity="0.42"/><rect x="6.7" y="82.68" width="1.1" height="1.400" fill="#f7c51b" opacity="0.42"/><rect x="7.8" y="82.68" width="1.1" height="1.400" fill="#d86fd6" opacity="0.42"/><rect x="10.1" y="82.68" width="3.4" height="1.400" fill="#e2e2e2" opacity="0.42"/><rect x="14.6" y="82.68" width="1.1" height="1.400" fill="#e2e2e2" opacity="0.42"/><rect x="16.8" y="82.68" width="1.1" height="1.400" fill="#e2e2e2" opacity="0.42"/><rect x="19.0" y="82.68" width="1.1" height="1.400" fill="#e2e2e2" opacity="0.42"/><rect x="21.3" y="82.68" width="1.1" height="1.400" fill="#e2e2e2" opacity="0.42"/><rect x="23.5" y="82.68" width="9.0" height="1.400" fill="#e2e2e2" opacity="0.42"/><rect x="33.6" y="82.68" width="1.1" height="1.400" fill="#d86fd6" opacity="0.42"/><rect x="0.0" y="85.10" width="1.1" height="1.400" fill="#f7c51b" opacity="0.42"/><rect x="1.1" y="85.10" width="2.2" height="1.400" fill="#69c3f5" opacity="0.42"/><rect x="3.4" y="85.10" width="4.5" height="1.400" fill="#69c3f5" opacity="0.42"/><rect x="7.8" y="85.10" width="1.1" height="1.400" fill="#69c3f5" opacity="0.42"/><rect x="0.0" y="87.52" width="5.6" height="1.400" fill="#69c3f5" opacity="0.42"/><rect x="6.7" y="87.52" width="5.6" height="1.400" fill="#c4c4c4" opacity="0.42"/><rect x="12.3" y="87.52" width="2.2" height="1.400" fill="#69c3f5" opacity="0.42"/><rect x="14.6" y="87.52" width="1.1" height="1.400" fill="#f7c51b" opacity="0.42"/><rect x="15.7" y="87.52" width="1.1" height="1.400" fill="#d86fd6" opacity="0.42"/><rect x="16.8" y="87.52" width="3.4" height="1.400" fill="#f47068" opacity="0.42"/><rect x="21.3" y="87.52" width="3.4" height="1.400" fill="#f47068" opacity="0.42"/><rect x="25.8" y="87.52" width="1.1" height="1.400" fill="#f47068" opacity="0.42"/><rect x="26.9" y="87.52" width="1.1" height="1.400" fill="#d86fd6" opacity="0.42"/><rect x="28.0" y="87.52" width="1.1" height="1.400" fill="#f7c51b" opacity="0.42"/><rect x="29.1" y="87.52" width="2.2" height="1.400" fill="#69c3f5" opacity="0.42"/><rect x="31.4" y="87.52" width="1.1" height="1.400" fill="#f7c51b" opacity="0.42"/><rect x="0.0" y="89.94" width="1.1" height="1.400" fill="#d86fd6" opacity="0.42"/><rect x="1.1" y="89.94" width="3.4" height="1.400" fill="#e2e2e2" opacity="0.42"/><rect x="4.5" y="89.94" width="1.1" height="1.400" fill="#d86fd6" opacity="0.42"/><rect x="5.6" y="89.94" width="1.1" height="1.400" fill="#f7c51b" opacity="0.42"/><rect x="6.7" y="89.94" width="2.2" height="1.400" fill="#69c3f5" opacity="0.42"/><rect x="9.0" y="89.94" width="4.5" height="1.400" fill="#69c3f5" opacity="0.42"/><rect x="13.4" y="89.94" width="1.1" height="1.400" fill="#69c3f5" opacity="0.42"/><rect x="0.0" y="92.36" width="1.1" height="1.400" fill="#69c3f5" opacity="0.42"/><rect x="1.1" y="92.36" width="4.5" height="1.400" fill="#69c3f5" opacity="0.42"/><rect x="5.6" y="92.36" width="1.1" height="1.400" fill="#69c3f5" opacity="0.42"/><rect x="6.7" y="92.36" width="1.1" height="1.400" fill="#f7c51b" opacity="0.42"/><rect x="7.8" y="92.36" width="1.1" height="1.400" fill="#d86fd6" opacity="0.42"/><rect x="10.1" y="92.36" width="5.6" height="1.400" fill="#e2e2e2" opacity="0.42"/><rect x="16.8" y="92.36" width="3.4" height="1.400" fill="#e2e2e2" opacity="0.42"/><rect x="20.2" y="92.36" width="1.1" height="1.400" fill="#e2e2e2" opacity="0.42"/><rect x="22.4" y="92.36" width="1.1" height="1.400" fill="#d86fd6" opacity="0.42"/><rect x="23.5" y="92.36" width="1.1" height="1.400" fill="#f7c51b" opacity="0.42"/><rect x="24.6" y="92.36" width="2.2" height="1.400" fill="#69c3f5" opacity="0.42"/><rect x="26.9" y="92.36" width="4.5" height="1.400" fill="#69c3f5" opacity="0.42"/><rect x="31.4" y="92.36" width="1.1" height="1.400" fill="#69c3f5" opacity="0.42"/></svg>
</div>
<div class="abs" style="left:1218px;top:741.800px;width:497px;height:19.600px;background:#06304f;z-index:4;will-change:transform">
 <div class="abs" style="left:4px;top:1.500px;font-size:11px;line-height:18px;color:#d0d0d0;font-family:'Liberation Sans',sans-serif">abc</div>
 <div class="abs" style="left:27px;top:-1px;font-family:'DejaVu Sans Mono',monospace;font-weight:700;font-size:18.500px;line-height:22px;color:#2490ff">num</div>
</div>
<div class="abs" style="left:1237.800px;top:532.900px;width:453.400px;height:251.300px;border:3.300px solid #fe1f12;border-radius:2px;z-index:6"></div>
<div id="leftstrip"></div>
<div class="abs" style="left:465px;top:76px;width:1px;height:786px;background:#222123"></div>
<div class="abs" style="left:705px;top:76px;width:1px;height:786px;background:#232224"></div>
</body>
</html>
